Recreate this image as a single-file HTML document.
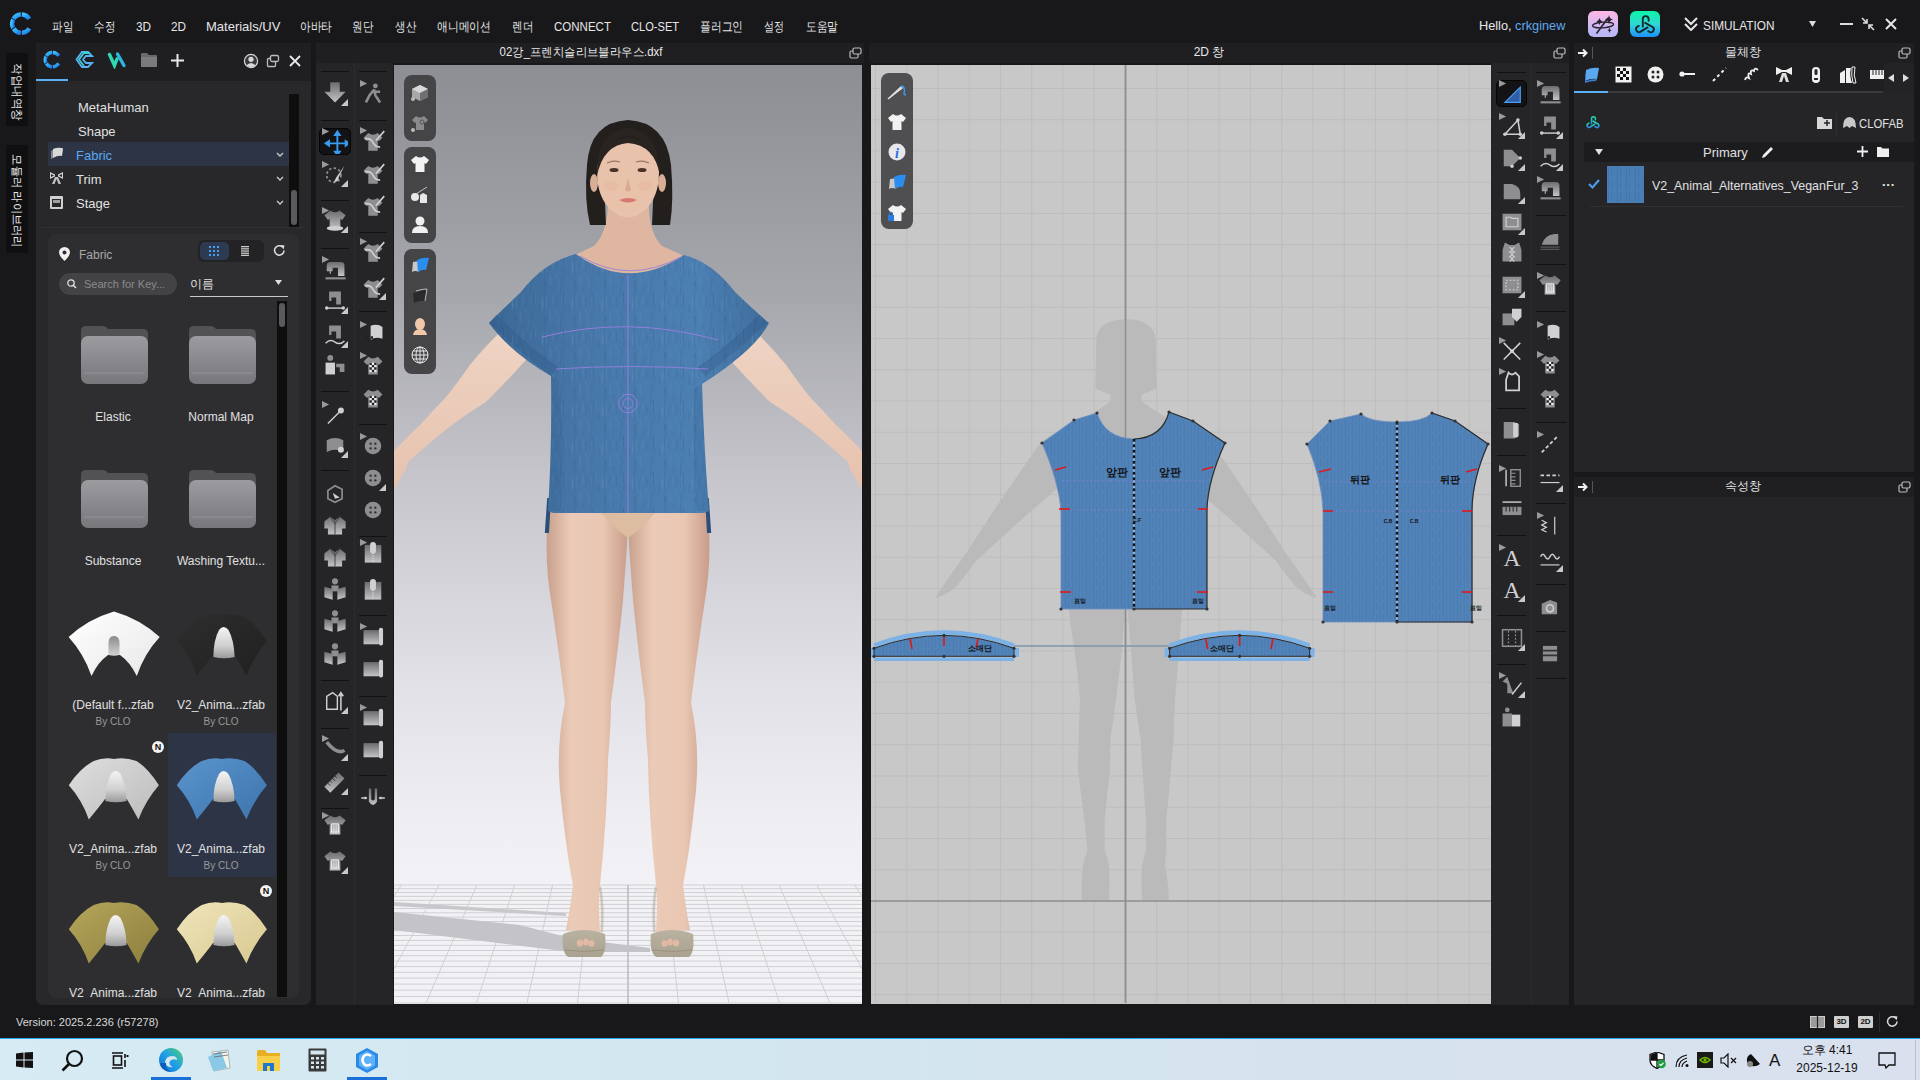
<!DOCTYPE html>
<html><head><meta charset="utf-8">
<style>
*{margin:0;padding:0;box-sizing:border-box}
html,body{width:1920px;height:1080px;overflow:hidden;background:#18181b;font-family:"Liberation Sans",sans-serif;color:#d8d8d8}
.a{position:absolute}
.t{position:absolute;white-space:nowrap;line-height:1}
#menubar .t{font-size:13px;color:#e6e6e6;top:20px}
</style></head><body>
<!-- menubar -->
<div id="menubar" class="a" style="left:0;top:0;width:1920px;height:43px;background:#18181b">
<svg class="a" style="left:6px;top:8px" width="32" height="32" viewBox="0 0 32 32"><defs><linearGradient id="lg6" x1="0" y1="0" x2="1" y2="1"><stop offset="0" stop-color="#3ec0ff"/><stop offset="1" stop-color="#1a7ee8"/></linearGradient></defs><g fill="none" stroke="url(#lg6)" stroke-width="4.4"><path d="M15.88 6.51 A9.2 9.2 0 0 1 23.29 10.96"/><path d="M14.92 6.51 A9.2 9.2 0 0 0 7.51 10.96"/><path d="M7.20 11.52 A9.2 9.2 0 0 0 7.20 19.88"/><path d="M7.68 20.71 A9.2 9.2 0 0 0 14.92 24.89"/><path d="M15.88 24.89 A9.2 9.2 0 0 0 23.29 20.44"/></g></svg>
<span class="t" style="left:52px;transform:scaleX(0.808);transform-origin:0 0">파일</span>
<span class="t" style="left:94px;transform:scaleX(0.808);transform-origin:0 0">수정</span>
<span class="t" style="left:136px;transform:scaleX(0.904);transform-origin:0 0">3D</span>
<span class="t" style="left:171px;transform:scaleX(0.904);transform-origin:0 0">2D</span>
<span class="t" style="left:206px">Materials/UV</span>
<span class="t" style="left:300px;transform:scaleX(0.821);transform-origin:0 0">아바타</span>
<span class="t" style="left:352px;transform:scaleX(0.808);transform-origin:0 0">원단</span>
<span class="t" style="left:395px;transform:scaleX(0.808);transform-origin:0 0">생산</span>
<span class="t" style="left:437px;transform:scaleX(0.831);transform-origin:0 0">애니메이션</span>
<span class="t" style="left:512px;transform:scaleX(0.808);transform-origin:0 0">렌더</span>
<span class="t" style="left:554px;transform:scaleX(0.886);transform-origin:0 0">CONNECT</span>
<span class="t" style="left:631px;transform:scaleX(0.853);transform-origin:0 0">CLO-SET</span>
<span class="t" style="left:700px;transform:scaleX(0.827);transform-origin:0 0">플러그인</span>
<span class="t" style="left:764px;transform:scaleX(0.769);transform-origin:0 0">설정</span>
<span class="t" style="left:806px;transform:scaleX(0.821);transform-origin:0 0">도움말</span>
<span class="t" style="left:1479px;top:19px;transform:scaleX(0.98);transform-origin:0 0">Hello, <span style="color:#5fa8f0">crkginew</span></span>
<div class="a" style="left:1588px;top:11px;width:30px;height:26px;border-radius:6px;background:linear-gradient(#ffb8e6,#bcb8f6 80%)"></div>
<div class="a" style="left:1630px;top:11px;width:30px;height:26px;border-radius:6px;background:linear-gradient(#0cf5a6,#30d8d4 50%,#1e90fa)"></div>
<svg class="a" style="left:1588px;top:11px" width="30" height="26" viewBox="0 0 30 26"><g fill="none" stroke="#2a2430" stroke-width="1.3"><ellipse cx="15" cy="14" rx="10.5" ry="2.8" transform="rotate(-4 15 14)"/></g><path d="M8.5 22.5 L20 7" stroke="#2a2430" stroke-width="1.7"/><path d="M21 4 Q21.6 8 25 8.5 Q21.6 9 21 13 Q20.4 9 17 8.5 Q20.4 8 21 4Z M11.5 7 Q12 10 14.5 10.5 Q12 11 11.5 14 Q11 11 8.5 10.5 Q11 10 11.5 7Z M21.5 16.5 Q21.9 19 23.5 19.3 Q21.9 19.6 21.5 22 Q21.1 19.6 19.5 19.3 Q21.1 19 21.5 16.5Z" fill="#2a2430"/></svg>
<svg class="a" style="left:1630px;top:11px" width="30" height="26" viewBox="0 0 30 26"><g fill="none" stroke="#14282a" stroke-width="1.9" stroke-linecap="round"><path d="M12.8 15.5 V8 A2.9 2.9 0 0 1 18.6 8 V9.8"/><path d="M15.2 11.8 L22.6 16 A2.9 2.9 0 0 1 19.7 21 L18.2 20.2"/><path d="M17.6 16.4 L10.2 20.8 A2.9 2.9 0 0 1 7.3 15.8 L8.8 14.9"/></g></svg>
<svg class="a" style="left:1683px;top:17px" width="16" height="14" viewBox="0 0 16 14"><g fill="none" stroke="#e6e6e6" stroke-width="2"><path d="M2 1 L8 7 L14 1"/><path d="M2 7 L8 13 L14 7"/></g></svg>
<span class="t" style="left:1703px;top:19px;color:#e6e6e6;transform:scaleX(0.91);transform-origin:0 0">SIMULATION</span>
<svg class="a" style="left:1809px;top:21px" width="7" height="6"><path d="M0 0 H7 L3.5 6z" fill="#ddd"/></svg>
<div class="a" style="left:1840px;top:23px;width:13px;height:2px;background:#ddd"></div>
<svg class="a" style="left:1861px;top:17px" width="14" height="14" viewBox="0 0 14 14"><g stroke="#ddd" stroke-width="1.6" fill="none"><path d="M1 1 L6 6 M6 2 V6 H2"/><path d="M13 13 L8 8 M8 12 V8 H12"/></g></svg>
<svg class="a" style="left:1884px;top:17px" width="14" height="14" viewBox="0 0 14 14"><g stroke="#e6e6e6" stroke-width="2"><path d="M2 2 L12 12 M12 2 L2 12"/></g></svg>
</div>

<!-- left vertical tabs -->
<div class="a" style="left:6px;top:53px;width:22px;height:73px;background:#0f0f11"></div>
<div class="a" style="left:6px;top:145px;width:22px;height:108px;background:#0f0f11"></div>
<div class="t" style="left:17px;top:92px;font-size:12px;color:#e8e8e8;transform:translate(-50%,-50%) rotate(90deg) scaleX(0.96)">작업내역창</div>
<div class="t" style="left:17px;top:201px;font-size:12px;color:#e8e8e8;transform:translate(-50%,-50%) rotate(90deg) scaleX(0.94)">모듈러 라이브러리</div>

<!-- library panel -->
<div class="a" style="left:36px;top:43px;width:275px;height:962px;background:#28282b;border-radius:0 0 7px 7px"></div>
<div class="a" style="left:36px;top:43px;width:275px;height:38px;background:#1f1f22"></div>
<div class="a" style="left:36px;top:79px;width:32px;height:2px;background:#5cb0f5"></div>
<svg class="a" style="left:40px;top:47px" width="26" height="26" viewBox="0 0 26 26"><defs><linearGradient id="lg40" x1="0" y1="0" x2="1" y2="1"><stop offset="0" stop-color="#3ec0ff"/><stop offset="1" stop-color="#1a7ee8"/></linearGradient></defs><g fill="none" stroke="url(#lg40)" stroke-width="3.4"><path d="M12.88 5.51 A7.2 7.2 0 0 1 18.67 8.99"/><path d="M12.12 5.51 A7.2 7.2 0 0 0 6.33 8.99"/><path d="M6.08 9.43 A7.2 7.2 0 0 0 6.08 15.97"/><path d="M6.46 16.62 A7.2 7.2 0 0 0 12.12 19.89"/><path d="M12.88 19.89 A7.2 7.2 0 0 0 18.67 16.41"/></g></svg>
<svg class="a" style="left:75px;top:50px" width="19" height="19" viewBox="0 0 19 19"><g fill="none" stroke-width="1.8"><path d="M13 2 L7 2 L1.5 9.5 L7 17 L13 17 L17 13 L11 13 L8 9.5 L11 6 L17 6 Z" stroke="#5ab0f0"/><path d="M15 3 L9 3 L4 9.5 L9 16" stroke="#36d0d0"/></g></svg>
<svg class="a" style="left:107px;top:51px" width="20" height="18" viewBox="0 0 20 18"><g stroke-linecap="round" stroke-width="3.4" fill="none"><path d="M2.5 3.5 L7.5 14.5 L10 8" stroke="#2ed8b0"/><path d="M10.5 3 L17 14.5" stroke="#2ab8e0"/></g></svg>
<svg class="a" style="left:140px;top:52px" width="18" height="16" viewBox="0 0 18 16"><path d="M1 2 Q1 1 2 1 H7 L9 3 H16 Q17 3 17 4 V14 Q17 15 16 15 H2 Q1 15 1 14Z" fill="#6a6a6d"/><path d="M1 5 H17 V14 Q17 15 16 15 H2 Q1 15 1 14Z" fill="#7b7b7e"/></svg>
<svg class="a" style="left:171px;top:54px" width="13" height="13"><path d="M6.5 0 V13 M0 6.5 H13" stroke="#e8e8e8" stroke-width="2"/></svg>
<svg class="a" style="left:243px;top:53px" width="16" height="16" viewBox="0 0 16 16"><circle cx="8" cy="8" r="7.2" fill="#d8d8d8"/><circle cx="8" cy="8" r="6" fill="#3a3a3d"/><circle cx="8" cy="6.3" r="2.6" fill="#d8d8d8"/><path d="M3.3 12.5 Q8 7.5 12.7 12.5 Q8 15.5 3.3 12.5Z" fill="#d8d8d8"/></svg>
<svg class="a" style="left:266px;top:54px" width="14" height="14" viewBox="0 0 14 14"><g fill="none" stroke="#bbb" stroke-width="1.3"><rect x="4.5" y="1.5" width="8" height="6" rx="1.5"/><path d="M4.5 4.5 H2.5 Q1.5 4.5 1.5 5.5 V11.5 Q1.5 12.5 2.5 12.5 H8.5 Q9.5 12.5 9.5 11.5 V7.5"/></g></svg>
<svg class="a" style="left:289px;top:55px" width="12" height="12"><path d="M1 1 L11 11 M11 1 L1 11" stroke="#e8e8e8" stroke-width="1.8"/></svg>

<div class="t" style="left:78px;top:101px;font-size:13px;color:#e0e0e0">MetaHuman</div>
<div class="t" style="left:78px;top:125px;font-size:13px;color:#e0e0e0">Shape</div>
<div class="a" style="left:48px;top:142px;width:241px;height:24px;background:#2d3446"></div>
<div class="t" style="left:76px;top:149px;font-size:13px;color:#5aa8f0">Fabric</div>
<div class="t" style="left:76px;top:173px;font-size:13px;color:#e0e0e0">Trim</div>
<div class="t" style="left:76px;top:197px;font-size:13px;color:#e0e0e0">Stage</div>
<svg class="a" style="left:50px;top:147px" width="14" height="13" viewBox="0 0 14 13"><path d="M1 4 L3 3 L3 11 L1 12Z" fill="#888"/><path d="M3 2 Q7 0 12 1 Q13 1 13 2 L12 9 Q8 8 3 11Z" fill="#d8d8d8"/></svg>
<svg class="a" style="left:50px;top:172px" width="13" height="13" viewBox="0 0 13 13"><path d="M0 0 V7 L5 4.5 V2.5 L8 2.5 V4.5 L13 7 V0 L8 2.5 H5Z" fill="#d0d0d0"/><path d="M5 5 L2 12 H4.5 L6.5 7 L8.5 12 H11 L8 5Z" fill="#c0c0c0"/><path d="M1 2 L4 3.5 L1 5Z M12 2 L9 3.5 L12 5Z" fill="#28282b"/></svg>
<svg class="a" style="left:50px;top:196px" width="13" height="13" viewBox="0 0 13 13"><rect x="0" y="0" width="13" height="13" rx="1" fill="#d0d0d0"/><rect x="2" y="3" width="9" height="8" fill="#28282b"/><rect x="3" y="4" width="7" height="3" fill="#a0a0a0"/><rect x="2" y="11" width="9" height="2" fill="#d0d0d0"/></svg>
<svg class="a" style="left:276px;top:152px" width="8" height="5"><path d="M1 1 L4 4 L7 1" stroke="#ccc" stroke-width="1.3" fill="none"/></svg>
<svg class="a" style="left:276px;top:176px" width="8" height="5"><path d="M1 1 L4 4 L7 1" stroke="#ccc" stroke-width="1.3" fill="none"/></svg>
<svg class="a" style="left:276px;top:200px" width="8" height="5"><path d="M1 1 L4 4 L7 1" stroke="#ccc" stroke-width="1.3" fill="none"/></svg>
<div class="a" style="left:289px;top:94px;width:10px;height:133px;background:#0e0e0f"></div>
<div class="a" style="left:291px;top:190px;width:6px;height:35px;background:#5a5a5c;border-radius:3px"></div>
<div class="a" style="left:42px;top:227px;width:263px;height:1px;background:#303033"></div>

<!-- fabric sub panel -->
<div class="a" style="left:48px;top:234px;width:251px;height:764px;background:#2e2e31;border-radius:8px"></div>
<svg class="a" style="left:59px;top:247px" width="11" height="14" viewBox="0 0 11 14"><path d="M5.5 0 A5.5 5.5 0 0 1 11 5.5 Q11 8.5 5.5 14 Q0 8.5 0 5.5 A5.5 5.5 0 0 1 5.5 0Z" fill="#f0f0f0"/><circle cx="5.5" cy="5.5" r="2" fill="#2e2e31"/></svg>
<div class="t" style="left:79px;top:249px;font-size:12px;color:#a8a8a8">Fabric</div>
<div class="a" style="left:198px;top:240px;width:66px;height:22px;background:#232326;border-radius:6px"></div>
<div class="a" style="left:200px;top:242px;width:29px;height:18px;background:#2c3a52;border-radius:5px"></div>
<svg class="a" style="left:209px;top:246px" width="10" height="10"><g fill="#4a9ef0"><rect x="0" y="0" width="2" height="2"/><rect x="4" y="0" width="2" height="2"/><rect x="8" y="0" width="2" height="2"/><rect x="0" y="4" width="2" height="2"/><rect x="4" y="4" width="2" height="2"/><rect x="8" y="4" width="2" height="2"/><rect x="0" y="8" width="2" height="2"/><rect x="4" y="8" width="2" height="2"/><rect x="8" y="8" width="2" height="2"/></g></svg>
<svg class="a" style="left:241px;top:246px" width="8" height="10"><g fill="#c8c8c8"><rect x="0" y="0" width="8" height="1.3"/><rect x="0" y="2.2" width="8" height="1.3"/><rect x="0" y="4.4" width="8" height="1.3"/><rect x="0" y="6.6" width="8" height="1.3"/><rect x="0" y="8.7" width="8" height="1.3"/></g></svg>
<svg class="a" style="left:273px;top:244px" width="13" height="13" viewBox="0 0 13 13"><path d="M11 6.5 A4.7 4.7 0 1 1 9.5 3" fill="none" stroke="#e0e0e0" stroke-width="1.5"/><path d="M7.5 1 L11.5 1.5 L10.5 5.5Z" fill="#e0e0e0"/></svg>
<div class="a" style="left:59px;top:273px;width:118px;height:22px;background:#434346;border-radius:11px"></div>
<svg class="a" style="left:67px;top:279px" width="10" height="10"><circle cx="4" cy="4" r="3.2" fill="none" stroke="#e0e0e0" stroke-width="1.3"/><path d="M6.3 6.3 L9 9" stroke="#e0e0e0" stroke-width="1.5"/></svg>
<div class="t" style="left:84px;top:279px;font-size:11px;color:#8a8a8c">Search for Key...</div>
<div class="t" style="left:190px;top:278px;font-size:12px;color:#e0e0e0">이름</div>
<svg class="a" style="left:275px;top:280px" width="7" height="5"><path d="M0 0 H7 L3.5 5z" fill="#ddd"/></svg>
<div class="a" style="left:190px;top:296px;width:98px;height:1px;background:#c8c8c8"></div>
<div class="a" style="left:277px;top:301px;width:10px;height:696px;background:#0e0e0f"></div>
<div class="a" style="left:279px;top:303px;width:6px;height:24px;background:#5a5a5c;border-radius:3px"></div>
<svg class="a" style="left:81px;top:326px" width="67" height="58" viewBox="0 0 67 58"><defs><linearGradient id="fg81326" x1="0" y1="0" x2="0" y2="1"><stop offset="0" stop-color="#9c9ca0"/><stop offset="1" stop-color="#77777b"/></linearGradient></defs><path d="M0 5 Q0 0 5 0 H22 Q25 0 27 3 H62 Q67 3 67 8 V20 H0Z" fill="#525255"/><rect x="0" y="10" width="67" height="48" rx="7" fill="url(#fg81326)"/><rect x="3" y="46" width="61" height="2" fill="#8a8a8e"/></svg>
<svg class="a" style="left:189px;top:326px" width="67" height="58" viewBox="0 0 67 58"><defs><linearGradient id="fg189326" x1="0" y1="0" x2="0" y2="1"><stop offset="0" stop-color="#9c9ca0"/><stop offset="1" stop-color="#77777b"/></linearGradient></defs><path d="M0 5 Q0 0 5 0 H22 Q25 0 27 3 H62 Q67 3 67 8 V20 H0Z" fill="#525255"/><rect x="0" y="10" width="67" height="48" rx="7" fill="url(#fg189326)"/><rect x="3" y="46" width="61" height="2" fill="#8a8a8e"/></svg>
<svg class="a" style="left:81px;top:470px" width="67" height="58" viewBox="0 0 67 58"><defs><linearGradient id="fg81470" x1="0" y1="0" x2="0" y2="1"><stop offset="0" stop-color="#9c9ca0"/><stop offset="1" stop-color="#77777b"/></linearGradient></defs><path d="M0 5 Q0 0 5 0 H22 Q25 0 27 3 H62 Q67 3 67 8 V20 H0Z" fill="#525255"/><rect x="0" y="10" width="67" height="48" rx="7" fill="url(#fg81470)"/><rect x="3" y="46" width="61" height="2" fill="#8a8a8e"/></svg>
<svg class="a" style="left:189px;top:470px" width="67" height="58" viewBox="0 0 67 58"><defs><linearGradient id="fg189470" x1="0" y1="0" x2="0" y2="1"><stop offset="0" stop-color="#9c9ca0"/><stop offset="1" stop-color="#77777b"/></linearGradient></defs><path d="M0 5 Q0 0 5 0 H22 Q25 0 27 3 H62 Q67 3 67 8 V20 H0Z" fill="#525255"/><rect x="0" y="10" width="67" height="48" rx="7" fill="url(#fg189470)"/><rect x="3" y="46" width="61" height="2" fill="#8a8a8e"/></svg>
<div class="t" style="left:113px;top:411px;font-size:12px;color:#e0e0e0;transform:translateX(-50%)">Elastic</div>
<div class="t" style="left:221px;top:411px;font-size:12px;color:#e0e0e0;transform:translateX(-50%)">Normal Map</div>
<div class="t" style="left:113px;top:555px;font-size:12px;color:#e0e0e0;transform:translateX(-50%)">Substance</div>
<div class="t" style="left:221px;top:555px;font-size:12px;color:#e0e0e0;transform:translateX(-50%)">Washing Textu...</div>
<div class="a" style="left:168px;top:733px;width:108px;height:144px;background:#2d3446"></div>
<svg class="a" style="left:68px;top:610px" width="92" height="68" viewBox="0 0 92 68"><defs><linearGradient id="dg68610" x1="0" y1="0" x2="1" y2="1"><stop offset="0" stop-color="#ffffff"/><stop offset="1" stop-color="#e8e8e8"/></linearGradient><linearGradient id="pdg68610" x1="0" y1="0" x2="0" y2="1"><stop offset="0" stop-color="#8a8a8a"/><stop offset="1" stop-color="#d4d4d4"/></linearGradient></defs><path d="M0.6 27 Q20 9 46 1.5 Q72 9 91.7 27 Q76 44 68.8 66 Q62 52 52 45 L40 45 Q30 52 23.5 66 Q16 44 0.6 27Z" fill="url(#dg68610)"/><path d="M40.5 45 V33 Q40.5 26 46 26 Q51.5 26 51.5 33 V45 Q46 46.5 40.5 45Z" fill="url(#pdg68610)"/></svg>
<svg class="a" style="left:176px;top:610px" width="92" height="68" viewBox="0 0 92 68"><defs><linearGradient id="dg176610" x1="0" y1="0" x2="1" y2="1"><stop offset="0" stop-color="#2e2e2e"/><stop offset="1" stop-color="#202020"/></linearGradient><linearGradient id="qdg176610" x1="0" y1="0" x2="0" y2="1"><stop offset="0" stop-color="#f4f4f4"/><stop offset="0.6" stop-color="#d0d0d0"/><stop offset="1" stop-color="#9a9a9a"/></linearGradient><linearGradient id="pdg176610" x1="0" y1="0" x2="0" y2="1"><stop offset="0" stop-color="#8a8a8a"/><stop offset="1" stop-color="#d4d4d4"/></linearGradient></defs><path d="M0.8 31.3 Q12 14 25.7 7 Q36 3 46 5 Q57 3 68.5 7 Q80 14 90.9 31.3 Q78 46 70.4 65.4 Q63 52 58.8 45 L37 45 Q32 52 20.8 65.4 Q14 46 0.8 31.3Z" fill="url(#dg176610)"/><path d="M37.4 46.9 Q37.5 30 43 20 Q47.5 14 52.5 20 Q58 30 58.6 46.9 Q48 49.5 37.4 46.9Z" fill="url(#qdg176610)"/></svg>
<svg class="a" style="left:68px;top:754px" width="92" height="68" viewBox="0 0 92 68"><defs><linearGradient id="dg68754" x1="0" y1="0" x2="1" y2="1"><stop offset="0" stop-color="#dedede"/><stop offset="1" stop-color="#bcbcbc"/></linearGradient><linearGradient id="qdg68754" x1="0" y1="0" x2="0" y2="1"><stop offset="0" stop-color="#f4f4f4"/><stop offset="0.6" stop-color="#d0d0d0"/><stop offset="1" stop-color="#9a9a9a"/></linearGradient><linearGradient id="pdg68754" x1="0" y1="0" x2="0" y2="1"><stop offset="0" stop-color="#8a8a8a"/><stop offset="1" stop-color="#d4d4d4"/></linearGradient></defs><path d="M0.8 31.3 Q12 14 25.7 7 Q36 3 46 5 Q57 3 68.5 7 Q80 14 90.9 31.3 Q78 46 70.4 65.4 Q63 52 58.8 45 L37 45 Q32 52 20.8 65.4 Q14 46 0.8 31.3Z" fill="url(#dg68754)"/><path d="M37.4 46.9 Q37.5 30 43 20 Q47.5 14 52.5 20 Q58 30 58.6 46.9 Q48 49.5 37.4 46.9Z" fill="url(#qdg68754)"/></svg>
<svg class="a" style="left:176px;top:754px" width="92" height="68" viewBox="0 0 92 68"><defs><linearGradient id="dg176754" x1="0" y1="0" x2="1" y2="1"><stop offset="0" stop-color="#5b95cd"/><stop offset="1" stop-color="#3c74ae"/></linearGradient><linearGradient id="qdg176754" x1="0" y1="0" x2="0" y2="1"><stop offset="0" stop-color="#f4f4f4"/><stop offset="0.6" stop-color="#d0d0d0"/><stop offset="1" stop-color="#9a9a9a"/></linearGradient><linearGradient id="pdg176754" x1="0" y1="0" x2="0" y2="1"><stop offset="0" stop-color="#8a8a8a"/><stop offset="1" stop-color="#d4d4d4"/></linearGradient></defs><path d="M0.8 31.3 Q12 14 25.7 7 Q36 3 46 5 Q57 3 68.5 7 Q80 14 90.9 31.3 Q78 46 70.4 65.4 Q63 52 58.8 45 L37 45 Q32 52 20.8 65.4 Q14 46 0.8 31.3Z" fill="url(#dg176754)"/><path d="M37.4 46.9 Q37.5 30 43 20 Q47.5 14 52.5 20 Q58 30 58.6 46.9 Q48 49.5 37.4 46.9Z" fill="url(#qdg176754)"/></svg>
<svg class="a" style="left:68px;top:898px" width="92" height="68" viewBox="0 0 92 68"><defs><linearGradient id="dg68898" x1="0" y1="0" x2="1" y2="1"><stop offset="0" stop-color="#b5a65a"/><stop offset="1" stop-color="#8c7f3e"/></linearGradient><linearGradient id="qdg68898" x1="0" y1="0" x2="0" y2="1"><stop offset="0" stop-color="#f4f4f4"/><stop offset="0.6" stop-color="#d0d0d0"/><stop offset="1" stop-color="#9a9a9a"/></linearGradient><linearGradient id="pdg68898" x1="0" y1="0" x2="0" y2="1"><stop offset="0" stop-color="#8a8a8a"/><stop offset="1" stop-color="#d4d4d4"/></linearGradient></defs><path d="M0.8 31.3 Q12 14 25.7 7 Q36 3 46 5 Q57 3 68.5 7 Q80 14 90.9 31.3 Q78 46 70.4 65.4 Q63 52 58.8 45 L37 45 Q32 52 20.8 65.4 Q14 46 0.8 31.3Z" fill="url(#dg68898)"/><path d="M37.4 46.9 Q37.5 30 43 20 Q47.5 14 52.5 20 Q58 30 58.6 46.9 Q48 49.5 37.4 46.9Z" fill="url(#qdg68898)"/></svg>
<svg class="a" style="left:176px;top:898px" width="92" height="68" viewBox="0 0 92 68"><defs><linearGradient id="dg176898" x1="0" y1="0" x2="1" y2="1"><stop offset="0" stop-color="#f0e6bc"/><stop offset="1" stop-color="#d8c890"/></linearGradient><linearGradient id="qdg176898" x1="0" y1="0" x2="0" y2="1"><stop offset="0" stop-color="#f4f4f4"/><stop offset="0.6" stop-color="#d0d0d0"/><stop offset="1" stop-color="#9a9a9a"/></linearGradient><linearGradient id="pdg176898" x1="0" y1="0" x2="0" y2="1"><stop offset="0" stop-color="#8a8a8a"/><stop offset="1" stop-color="#d4d4d4"/></linearGradient></defs><path d="M0.8 31.3 Q12 14 25.7 7 Q36 3 46 5 Q57 3 68.5 7 Q80 14 90.9 31.3 Q78 46 70.4 65.4 Q63 52 58.8 45 L37 45 Q32 52 20.8 65.4 Q14 46 0.8 31.3Z" fill="url(#dg176898)"/><path d="M37.4 46.9 Q37.5 30 43 20 Q47.5 14 52.5 20 Q58 30 58.6 46.9 Q48 49.5 37.4 46.9Z" fill="url(#qdg176898)"/></svg>
<div class="t" style="left:113px;top:699px;font-size:12px;color:#e0e0e0;transform:translateX(-50%)">(Default f...zfab</div>
<div class="t" style="left:221px;top:699px;font-size:12px;color:#e0e0e0;transform:translateX(-50%)">V2_Anima...zfab</div>
<div class="t" style="left:113px;top:717px;font-size:10px;color:#9a9a9a;transform:translateX(-50%)">By CLO</div>
<div class="t" style="left:221px;top:717px;font-size:10px;color:#9a9a9a;transform:translateX(-50%)">By CLO</div>
<div class="t" style="left:113px;top:843px;font-size:12px;color:#e0e0e0;transform:translateX(-50%)">V2_Anima...zfab</div>
<div class="t" style="left:221px;top:843px;font-size:12px;color:#e0e0e0;transform:translateX(-50%)">V2_Anima...zfab</div>
<div class="t" style="left:113px;top:861px;font-size:10px;color:#9a9a9a;transform:translateX(-50%)">By CLO</div>
<div class="t" style="left:221px;top:861px;font-size:10px;color:#9a9a9a;transform:translateX(-50%)">By CLO</div>
<div class="a" style="left:48px;top:980px;width:229px;height:18px;overflow:hidden"><div class="t" style="left:65px;top:7px;font-size:12px;color:#e0e0e0;transform:translateX(-50%)">V2_Anima...zfab</div><div class="t" style="left:173px;top:7px;font-size:12px;color:#e0e0e0;transform:translateX(-50%)">V2_Anima...zfab</div></div>
<div class="a" style="left:152px;top:741px;width:12px;height:12px;border-radius:6px;background:#f4f4f4;color:#111;font-size:9px;font-weight:bold;line-height:12px;text-align:center">N</div>
<div class="a" style="left:260px;top:885px;width:12px;height:12px;border-radius:6px;background:#f4f4f4;color:#111;font-size:9px;font-weight:bold;line-height:12px;text-align:center">N</div>
<!-- version bar -->
<div class="t" style="left:16px;top:1017px;font-size:11px;color:#d8d8d8">Version: 2025.2.236 (r57278)</div>
<!-- 3D toolbar -->
<div class="a" style="left:316px;top:63px;width:77px;height:942px;background:#252528"></div>
<!-- 3D title -->
<div class="a" style="left:316px;top:43px;width:548px;height:20px;background:#1f1f22"></div>
<!-- 3D viewport -->
<div class="a" style="left:394px;top:65px;width:468px;height:939px;overflow:hidden;background:linear-gradient(#8d8d94 0px,#a6a6ad 230px,#c8c8ce 430px,#e2e1e7 620px,#efeef3 760px,#f2f1f5 820px)">
<svg class="a" style="left:0;top:0" width="468" height="939" viewBox="394 65 468 939">
<rect x="394" y="885" width="468" height="119" fill="#f2f1f5"/>
<g stroke="#d0d0d4" stroke-width="1"><line x1="394" y1="885.0" x2="862" y2="885.0"/>
<line x1="394" y1="888.7" x2="862" y2="888.7"/>
<line x1="394" y1="892.5" x2="862" y2="892.5"/>
<line x1="394" y1="896.4" x2="862" y2="896.4"/>
<line x1="394" y1="900.4" x2="862" y2="900.4"/>
<line x1="394" y1="904.4" x2="862" y2="904.4"/>
<line x1="394" y1="908.5" x2="862" y2="908.5"/>
<line x1="394" y1="912.8" x2="862" y2="912.8"/>
<line x1="394" y1="917.1" x2="862" y2="917.1"/>
<line x1="394" y1="921.5" x2="862" y2="921.5"/>
<line x1="394" y1="926.1" x2="862" y2="926.1"/>
<line x1="394" y1="930.7" x2="862" y2="930.7"/>
<line x1="394" y1="935.5" x2="862" y2="935.5"/>
<line x1="394" y1="940.4" x2="862" y2="940.4"/>
<line x1="394" y1="945.4" x2="862" y2="945.4"/>
<line x1="394" y1="950.5" x2="862" y2="950.5"/>
<line x1="394" y1="955.7" x2="862" y2="955.7"/>
<line x1="394" y1="961.1" x2="862" y2="961.1"/>
<line x1="394" y1="966.6" x2="862" y2="966.6"/>
<line x1="394" y1="972.3" x2="862" y2="972.3"/>
<line x1="394" y1="978.1" x2="862" y2="978.1"/>
<line x1="394" y1="984.1" x2="862" y2="984.1"/>
<line x1="394" y1="990.2" x2="862" y2="990.2"/>
<line x1="394" y1="996.5" x2="862" y2="996.5"/>
<line x1="394" y1="1003.0" x2="862" y2="1003.0"/>
<line x1="99.3" y1="885" x2="-79.0" y2="1003"/>
<line x1="137.0" y1="885" x2="-28.5" y2="1003"/>
<line x1="174.8" y1="885" x2="22.0" y2="1003"/>
<line x1="212.6" y1="885" x2="72.5" y2="1003"/>
<line x1="250.3" y1="885" x2="123.0" y2="1003"/>
<line x1="288.1" y1="885" x2="173.5" y2="1003"/>
<line x1="325.9" y1="885" x2="224.0" y2="1003"/>
<line x1="363.6" y1="885" x2="274.5" y2="1003"/>
<line x1="401.4" y1="885" x2="325.0" y2="1003"/>
<line x1="439.2" y1="885" x2="375.5" y2="1003"/>
<line x1="476.9" y1="885" x2="426.0" y2="1003"/>
<line x1="514.7" y1="885" x2="476.5" y2="1003"/>
<line x1="552.5" y1="885" x2="527.0" y2="1003"/>
<line x1="590.2" y1="885" x2="577.5" y2="1003"/>
<line x1="628.0" y1="885" x2="628.0" y2="1003"/>
<line x1="665.8" y1="885" x2="678.5" y2="1003"/>
<line x1="703.5" y1="885" x2="729.0" y2="1003"/>
<line x1="741.3" y1="885" x2="779.5" y2="1003"/>
<line x1="779.1" y1="885" x2="830.0" y2="1003"/>
<line x1="816.8" y1="885" x2="880.5" y2="1003"/>
<line x1="854.6" y1="885" x2="931.0" y2="1003"/>
<line x1="892.4" y1="885" x2="981.5" y2="1003"/>
<line x1="930.1" y1="885" x2="1032.0" y2="1003"/>
<line x1="967.9" y1="885" x2="1082.5" y2="1003"/>
<line x1="1005.7" y1="885" x2="1133.0" y2="1003"/>
<line x1="1043.4" y1="885" x2="1183.5" y2="1003"/>
<line x1="1081.2" y1="885" x2="1234.0" y2="1003"/>
<line x1="1119.0" y1="885" x2="1284.5" y2="1003"/>
<line x1="1156.7" y1="885" x2="1335.0" y2="1003"/></g>
<line x1="628" y1="885" x2="628" y2="1004" stroke="#b8b8bd" stroke-width="1.3"/>
<path d="M394 902 L566 913 L566 916 L394 906Z" fill="#c8c8cc"/>
<path d="M394 912 L520 925 L570 938 L650 948 L650 952 L570 952 L394 930Z" fill="#c4c4c8"/>
<defs>
<linearGradient id="skinL" x1="0" x2="1"><stop offset="0" stop-color="#c8a08c"/><stop offset="0.3" stop-color="#ebcbb8"/><stop offset="0.7" stop-color="#e8c6b2"/><stop offset="1" stop-color="#c89c88"/></linearGradient>
<linearGradient id="armG" x1="0" y1="0" x2="0" y2="1"><stop offset="0" stop-color="#efd3c3"/><stop offset="1" stop-color="#e6c2ae"/></linearGradient>
<linearGradient id="shirtG" x1="0" x2="1"><stop offset="0" stop-color="#3b6896"/><stop offset="0.35" stop-color="#4878aa"/><stop offset="0.75" stop-color="#4c7fb2"/><stop offset="1" stop-color="#3f6d9c"/></linearGradient>
<linearGradient id="shoeG" x1="0" y1="0" x2="0" y2="1"><stop offset="0" stop-color="#b9b2a0"/><stop offset="1" stop-color="#aaa290"/></linearGradient>
<pattern id="fur" width="30" height="36" patternUnits="userSpaceOnUse"><path d="M18.7 26.7 q0.7 5.3 0 10.6" stroke="#6090c0" stroke-width="1.6" opacity="0.12" fill="none"/><path d="M18.7 -9.3 q0.7 5.3 0 10.6" stroke="#6090c0" stroke-width="1.6" opacity="0.12" fill="none"/><path d="M18.7 62.7 q0.7 5.3 0 10.6" stroke="#6090c0" stroke-width="1.6" opacity="0.12" fill="none"/><path d="M-11.3 26.7 q0.7 5.3 0 10.6" stroke="#6090c0" stroke-width="1.6" opacity="0.12" fill="none"/><path d="M-11.3 -9.3 q0.7 5.3 0 10.6" stroke="#6090c0" stroke-width="1.6" opacity="0.12" fill="none"/><path d="M-11.3 62.7 q0.7 5.3 0 10.6" stroke="#6090c0" stroke-width="1.6" opacity="0.12" fill="none"/><path d="M48.7 26.7 q0.7 5.3 0 10.6" stroke="#6090c0" stroke-width="1.6" opacity="0.12" fill="none"/><path d="M48.7 -9.3 q0.7 5.3 0 10.6" stroke="#6090c0" stroke-width="1.6" opacity="0.12" fill="none"/><path d="M48.7 62.7 q0.7 5.3 0 10.6" stroke="#6090c0" stroke-width="1.6" opacity="0.12" fill="none"/><path d="M14.0 34.0 q-1.2 4.8 0 9.5" stroke="#2c5888" stroke-width="1.5" opacity="0.16" fill="none"/><path d="M14.0 -2.0 q-1.2 4.8 0 9.5" stroke="#2c5888" stroke-width="1.5" opacity="0.16" fill="none"/><path d="M14.0 70.0 q-1.2 4.8 0 9.5" stroke="#2c5888" stroke-width="1.5" opacity="0.16" fill="none"/><path d="M-16.0 34.0 q-1.2 4.8 0 9.5" stroke="#2c5888" stroke-width="1.5" opacity="0.16" fill="none"/><path d="M-16.0 -2.0 q-1.2 4.8 0 9.5" stroke="#2c5888" stroke-width="1.5" opacity="0.16" fill="none"/><path d="M-16.0 70.0 q-1.2 4.8 0 9.5" stroke="#2c5888" stroke-width="1.5" opacity="0.16" fill="none"/><path d="M44.0 34.0 q-1.2 4.8 0 9.5" stroke="#2c5888" stroke-width="1.5" opacity="0.16" fill="none"/><path d="M44.0 -2.0 q-1.2 4.8 0 9.5" stroke="#2c5888" stroke-width="1.5" opacity="0.16" fill="none"/><path d="M44.0 70.0 q-1.2 4.8 0 9.5" stroke="#2c5888" stroke-width="1.5" opacity="0.16" fill="none"/><path d="M16.3 20.7 q-0.7 2.5 0 5.1" stroke="#6090c0" stroke-width="1.0" opacity="0.24" fill="none"/><path d="M16.3 -15.3 q-0.7 2.5 0 5.1" stroke="#6090c0" stroke-width="1.0" opacity="0.24" fill="none"/><path d="M16.3 56.7 q-0.7 2.5 0 5.1" stroke="#6090c0" stroke-width="1.0" opacity="0.24" fill="none"/><path d="M-13.7 20.7 q-0.7 2.5 0 5.1" stroke="#6090c0" stroke-width="1.0" opacity="0.24" fill="none"/><path d="M-13.7 -15.3 q-0.7 2.5 0 5.1" stroke="#6090c0" stroke-width="1.0" opacity="0.24" fill="none"/><path d="M-13.7 56.7 q-0.7 2.5 0 5.1" stroke="#6090c0" stroke-width="1.0" opacity="0.24" fill="none"/><path d="M46.3 20.7 q-0.7 2.5 0 5.1" stroke="#6090c0" stroke-width="1.0" opacity="0.24" fill="none"/><path d="M46.3 -15.3 q-0.7 2.5 0 5.1" stroke="#6090c0" stroke-width="1.0" opacity="0.24" fill="none"/><path d="M46.3 56.7 q-0.7 2.5 0 5.1" stroke="#6090c0" stroke-width="1.0" opacity="0.24" fill="none"/><path d="M4.8 28.7 q-1.1 3.0 0 6.0" stroke="#2c5888" stroke-width="1.3" opacity="0.26" fill="none"/><path d="M4.8 -7.3 q-1.1 3.0 0 6.0" stroke="#2c5888" stroke-width="1.3" opacity="0.26" fill="none"/><path d="M4.8 64.7 q-1.1 3.0 0 6.0" stroke="#2c5888" stroke-width="1.3" opacity="0.26" fill="none"/><path d="M-25.2 28.7 q-1.1 3.0 0 6.0" stroke="#2c5888" stroke-width="1.3" opacity="0.26" fill="none"/><path d="M-25.2 -7.3 q-1.1 3.0 0 6.0" stroke="#2c5888" stroke-width="1.3" opacity="0.26" fill="none"/><path d="M-25.2 64.7 q-1.1 3.0 0 6.0" stroke="#2c5888" stroke-width="1.3" opacity="0.26" fill="none"/><path d="M34.8 28.7 q-1.1 3.0 0 6.0" stroke="#2c5888" stroke-width="1.3" opacity="0.26" fill="none"/><path d="M34.8 -7.3 q-1.1 3.0 0 6.0" stroke="#2c5888" stroke-width="1.3" opacity="0.26" fill="none"/><path d="M34.8 64.7 q-1.1 3.0 0 6.0" stroke="#2c5888" stroke-width="1.3" opacity="0.26" fill="none"/><path d="M6.3 7.8 q-0.6 5.9 0 11.9" stroke="#6090c0" stroke-width="1.5" opacity="0.21" fill="none"/><path d="M6.3 -28.2 q-0.6 5.9 0 11.9" stroke="#6090c0" stroke-width="1.5" opacity="0.21" fill="none"/><path d="M6.3 43.8 q-0.6 5.9 0 11.9" stroke="#6090c0" stroke-width="1.5" opacity="0.21" fill="none"/><path d="M-23.7 7.8 q-0.6 5.9 0 11.9" stroke="#6090c0" stroke-width="1.5" opacity="0.21" fill="none"/><path d="M-23.7 -28.2 q-0.6 5.9 0 11.9" stroke="#6090c0" stroke-width="1.5" opacity="0.21" fill="none"/><path d="M-23.7 43.8 q-0.6 5.9 0 11.9" stroke="#6090c0" stroke-width="1.5" opacity="0.21" fill="none"/><path d="M36.3 7.8 q-0.6 5.9 0 11.9" stroke="#6090c0" stroke-width="1.5" opacity="0.21" fill="none"/><path d="M36.3 -28.2 q-0.6 5.9 0 11.9" stroke="#6090c0" stroke-width="1.5" opacity="0.21" fill="none"/><path d="M36.3 43.8 q-0.6 5.9 0 11.9" stroke="#6090c0" stroke-width="1.5" opacity="0.21" fill="none"/><path d="M20.3 7.4 q1.4 5.8 0 11.6" stroke="#6090c0" stroke-width="1.4" opacity="0.17" fill="none"/><path d="M20.3 -28.6 q1.4 5.8 0 11.6" stroke="#6090c0" stroke-width="1.4" opacity="0.17" fill="none"/><path d="M20.3 43.4 q1.4 5.8 0 11.6" stroke="#6090c0" stroke-width="1.4" opacity="0.17" fill="none"/><path d="M-9.7 7.4 q1.4 5.8 0 11.6" stroke="#6090c0" stroke-width="1.4" opacity="0.17" fill="none"/><path d="M-9.7 -28.6 q1.4 5.8 0 11.6" stroke="#6090c0" stroke-width="1.4" opacity="0.17" fill="none"/><path d="M-9.7 43.4 q1.4 5.8 0 11.6" stroke="#6090c0" stroke-width="1.4" opacity="0.17" fill="none"/><path d="M50.3 7.4 q1.4 5.8 0 11.6" stroke="#6090c0" stroke-width="1.4" opacity="0.17" fill="none"/><path d="M50.3 -28.6 q1.4 5.8 0 11.6" stroke="#6090c0" stroke-width="1.4" opacity="0.17" fill="none"/><path d="M50.3 43.4 q1.4 5.8 0 11.6" stroke="#6090c0" stroke-width="1.4" opacity="0.17" fill="none"/><path d="M10.8 6.0 q-0.6 3.0 0 6.0" stroke="#2c5888" stroke-width="0.9" opacity="0.12" fill="none"/><path d="M10.8 -30.0 q-0.6 3.0 0 6.0" stroke="#2c5888" stroke-width="0.9" opacity="0.12" fill="none"/><path d="M10.8 42.0 q-0.6 3.0 0 6.0" stroke="#2c5888" stroke-width="0.9" opacity="0.12" fill="none"/><path d="M-19.2 6.0 q-0.6 3.0 0 6.0" stroke="#2c5888" stroke-width="0.9" opacity="0.12" fill="none"/><path d="M-19.2 -30.0 q-0.6 3.0 0 6.0" stroke="#2c5888" stroke-width="0.9" opacity="0.12" fill="none"/><path d="M-19.2 42.0 q-0.6 3.0 0 6.0" stroke="#2c5888" stroke-width="0.9" opacity="0.12" fill="none"/><path d="M40.8 6.0 q-0.6 3.0 0 6.0" stroke="#2c5888" stroke-width="0.9" opacity="0.12" fill="none"/><path d="M40.8 -30.0 q-0.6 3.0 0 6.0" stroke="#2c5888" stroke-width="0.9" opacity="0.12" fill="none"/><path d="M40.8 42.0 q-0.6 3.0 0 6.0" stroke="#2c5888" stroke-width="0.9" opacity="0.12" fill="none"/><path d="M20.3 12.2 q-0.1 3.6 0 7.2" stroke="#2c5888" stroke-width="1.5" opacity="0.20" fill="none"/><path d="M20.3 -23.8 q-0.1 3.6 0 7.2" stroke="#2c5888" stroke-width="1.5" opacity="0.20" fill="none"/><path d="M20.3 48.2 q-0.1 3.6 0 7.2" stroke="#2c5888" stroke-width="1.5" opacity="0.20" fill="none"/><path d="M-9.7 12.2 q-0.1 3.6 0 7.2" stroke="#2c5888" stroke-width="1.5" opacity="0.20" fill="none"/><path d="M-9.7 -23.8 q-0.1 3.6 0 7.2" stroke="#2c5888" stroke-width="1.5" opacity="0.20" fill="none"/><path d="M-9.7 48.2 q-0.1 3.6 0 7.2" stroke="#2c5888" stroke-width="1.5" opacity="0.20" fill="none"/><path d="M50.3 12.2 q-0.1 3.6 0 7.2" stroke="#2c5888" stroke-width="1.5" opacity="0.20" fill="none"/><path d="M50.3 -23.8 q-0.1 3.6 0 7.2" stroke="#2c5888" stroke-width="1.5" opacity="0.20" fill="none"/><path d="M50.3 48.2 q-0.1 3.6 0 7.2" stroke="#2c5888" stroke-width="1.5" opacity="0.20" fill="none"/><path d="M21.1 2.1 q0.7 5.9 0 11.8" stroke="#6090c0" stroke-width="0.8" opacity="0.12" fill="none"/><path d="M21.1 -33.9 q0.7 5.9 0 11.8" stroke="#6090c0" stroke-width="0.8" opacity="0.12" fill="none"/><path d="M21.1 38.1 q0.7 5.9 0 11.8" stroke="#6090c0" stroke-width="0.8" opacity="0.12" fill="none"/><path d="M-8.9 2.1 q0.7 5.9 0 11.8" stroke="#6090c0" stroke-width="0.8" opacity="0.12" fill="none"/><path d="M-8.9 -33.9 q0.7 5.9 0 11.8" stroke="#6090c0" stroke-width="0.8" opacity="0.12" fill="none"/><path d="M-8.9 38.1 q0.7 5.9 0 11.8" stroke="#6090c0" stroke-width="0.8" opacity="0.12" fill="none"/><path d="M51.1 2.1 q0.7 5.9 0 11.8" stroke="#6090c0" stroke-width="0.8" opacity="0.12" fill="none"/><path d="M51.1 -33.9 q0.7 5.9 0 11.8" stroke="#6090c0" stroke-width="0.8" opacity="0.12" fill="none"/><path d="M51.1 38.1 q0.7 5.9 0 11.8" stroke="#6090c0" stroke-width="0.8" opacity="0.12" fill="none"/><path d="M23.6 13.2 q-1.4 4.5 0 9.0" stroke="#2c5888" stroke-width="0.8" opacity="0.27" fill="none"/><path d="M23.6 -22.8 q-1.4 4.5 0 9.0" stroke="#2c5888" stroke-width="0.8" opacity="0.27" fill="none"/><path d="M23.6 49.2 q-1.4 4.5 0 9.0" stroke="#2c5888" stroke-width="0.8" opacity="0.27" fill="none"/><path d="M-6.4 13.2 q-1.4 4.5 0 9.0" stroke="#2c5888" stroke-width="0.8" opacity="0.27" fill="none"/><path d="M-6.4 -22.8 q-1.4 4.5 0 9.0" stroke="#2c5888" stroke-width="0.8" opacity="0.27" fill="none"/><path d="M-6.4 49.2 q-1.4 4.5 0 9.0" stroke="#2c5888" stroke-width="0.8" opacity="0.27" fill="none"/><path d="M53.6 13.2 q-1.4 4.5 0 9.0" stroke="#2c5888" stroke-width="0.8" opacity="0.27" fill="none"/><path d="M53.6 -22.8 q-1.4 4.5 0 9.0" stroke="#2c5888" stroke-width="0.8" opacity="0.27" fill="none"/><path d="M53.6 49.2 q-1.4 4.5 0 9.0" stroke="#2c5888" stroke-width="0.8" opacity="0.27" fill="none"/><path d="M5.9 27.2 q-0.5 5.8 0 11.5" stroke="#2c5888" stroke-width="1.6" opacity="0.20" fill="none"/><path d="M5.9 -8.8 q-0.5 5.8 0 11.5" stroke="#2c5888" stroke-width="1.6" opacity="0.20" fill="none"/><path d="M5.9 63.2 q-0.5 5.8 0 11.5" stroke="#2c5888" stroke-width="1.6" opacity="0.20" fill="none"/><path d="M-24.1 27.2 q-0.5 5.8 0 11.5" stroke="#2c5888" stroke-width="1.6" opacity="0.20" fill="none"/><path d="M-24.1 -8.8 q-0.5 5.8 0 11.5" stroke="#2c5888" stroke-width="1.6" opacity="0.20" fill="none"/><path d="M-24.1 63.2 q-0.5 5.8 0 11.5" stroke="#2c5888" stroke-width="1.6" opacity="0.20" fill="none"/><path d="M35.9 27.2 q-0.5 5.8 0 11.5" stroke="#2c5888" stroke-width="1.6" opacity="0.20" fill="none"/><path d="M35.9 -8.8 q-0.5 5.8 0 11.5" stroke="#2c5888" stroke-width="1.6" opacity="0.20" fill="none"/><path d="M35.9 63.2 q-0.5 5.8 0 11.5" stroke="#2c5888" stroke-width="1.6" opacity="0.20" fill="none"/><path d="M23.3 3.9 q1.1 5.1 0 10.2" stroke="#2c5888" stroke-width="1.4" opacity="0.27" fill="none"/><path d="M23.3 -32.1 q1.1 5.1 0 10.2" stroke="#2c5888" stroke-width="1.4" opacity="0.27" fill="none"/><path d="M23.3 39.9 q1.1 5.1 0 10.2" stroke="#2c5888" stroke-width="1.4" opacity="0.27" fill="none"/><path d="M-6.7 3.9 q1.1 5.1 0 10.2" stroke="#2c5888" stroke-width="1.4" opacity="0.27" fill="none"/><path d="M-6.7 -32.1 q1.1 5.1 0 10.2" stroke="#2c5888" stroke-width="1.4" opacity="0.27" fill="none"/><path d="M-6.7 39.9 q1.1 5.1 0 10.2" stroke="#2c5888" stroke-width="1.4" opacity="0.27" fill="none"/><path d="M53.3 3.9 q1.1 5.1 0 10.2" stroke="#2c5888" stroke-width="1.4" opacity="0.27" fill="none"/><path d="M53.3 -32.1 q1.1 5.1 0 10.2" stroke="#2c5888" stroke-width="1.4" opacity="0.27" fill="none"/><path d="M53.3 39.9 q1.1 5.1 0 10.2" stroke="#2c5888" stroke-width="1.4" opacity="0.27" fill="none"/><path d="M2.7 12.3 q-0.5 4.6 0 9.3" stroke="#6090c0" stroke-width="1.5" opacity="0.21" fill="none"/><path d="M2.7 -23.7 q-0.5 4.6 0 9.3" stroke="#6090c0" stroke-width="1.5" opacity="0.21" fill="none"/><path d="M2.7 48.3 q-0.5 4.6 0 9.3" stroke="#6090c0" stroke-width="1.5" opacity="0.21" fill="none"/><path d="M-27.3 12.3 q-0.5 4.6 0 9.3" stroke="#6090c0" stroke-width="1.5" opacity="0.21" fill="none"/><path d="M-27.3 -23.7 q-0.5 4.6 0 9.3" stroke="#6090c0" stroke-width="1.5" opacity="0.21" fill="none"/><path d="M-27.3 48.3 q-0.5 4.6 0 9.3" stroke="#6090c0" stroke-width="1.5" opacity="0.21" fill="none"/><path d="M32.7 12.3 q-0.5 4.6 0 9.3" stroke="#6090c0" stroke-width="1.5" opacity="0.21" fill="none"/><path d="M32.7 -23.7 q-0.5 4.6 0 9.3" stroke="#6090c0" stroke-width="1.5" opacity="0.21" fill="none"/><path d="M32.7 48.3 q-0.5 4.6 0 9.3" stroke="#6090c0" stroke-width="1.5" opacity="0.21" fill="none"/><path d="M9.4 11.4 q-1.1 3.1 0 6.2" stroke="#2c5888" stroke-width="0.9" opacity="0.28" fill="none"/><path d="M9.4 -24.6 q-1.1 3.1 0 6.2" stroke="#2c5888" stroke-width="0.9" opacity="0.28" fill="none"/><path d="M9.4 47.4 q-1.1 3.1 0 6.2" stroke="#2c5888" stroke-width="0.9" opacity="0.28" fill="none"/><path d="M-20.6 11.4 q-1.1 3.1 0 6.2" stroke="#2c5888" stroke-width="0.9" opacity="0.28" fill="none"/><path d="M-20.6 -24.6 q-1.1 3.1 0 6.2" stroke="#2c5888" stroke-width="0.9" opacity="0.28" fill="none"/><path d="M-20.6 47.4 q-1.1 3.1 0 6.2" stroke="#2c5888" stroke-width="0.9" opacity="0.28" fill="none"/><path d="M39.4 11.4 q-1.1 3.1 0 6.2" stroke="#2c5888" stroke-width="0.9" opacity="0.28" fill="none"/><path d="M39.4 -24.6 q-1.1 3.1 0 6.2" stroke="#2c5888" stroke-width="0.9" opacity="0.28" fill="none"/><path d="M39.4 47.4 q-1.1 3.1 0 6.2" stroke="#2c5888" stroke-width="0.9" opacity="0.28" fill="none"/><path d="M4.8 1.7 q-0.3 6.0 0 11.9" stroke="#2c5888" stroke-width="1.2" opacity="0.22" fill="none"/><path d="M4.8 -34.3 q-0.3 6.0 0 11.9" stroke="#2c5888" stroke-width="1.2" opacity="0.22" fill="none"/><path d="M4.8 37.7 q-0.3 6.0 0 11.9" stroke="#2c5888" stroke-width="1.2" opacity="0.22" fill="none"/><path d="M-25.2 1.7 q-0.3 6.0 0 11.9" stroke="#2c5888" stroke-width="1.2" opacity="0.22" fill="none"/><path d="M-25.2 -34.3 q-0.3 6.0 0 11.9" stroke="#2c5888" stroke-width="1.2" opacity="0.22" fill="none"/><path d="M-25.2 37.7 q-0.3 6.0 0 11.9" stroke="#2c5888" stroke-width="1.2" opacity="0.22" fill="none"/><path d="M34.8 1.7 q-0.3 6.0 0 11.9" stroke="#2c5888" stroke-width="1.2" opacity="0.22" fill="none"/><path d="M34.8 -34.3 q-0.3 6.0 0 11.9" stroke="#2c5888" stroke-width="1.2" opacity="0.22" fill="none"/><path d="M34.8 37.7 q-0.3 6.0 0 11.9" stroke="#2c5888" stroke-width="1.2" opacity="0.22" fill="none"/><path d="M24.8 16.4 q1.2 4.0 0 8.0" stroke="#2c5888" stroke-width="0.8" opacity="0.20" fill="none"/><path d="M24.8 -19.6 q1.2 4.0 0 8.0" stroke="#2c5888" stroke-width="0.8" opacity="0.20" fill="none"/><path d="M24.8 52.4 q1.2 4.0 0 8.0" stroke="#2c5888" stroke-width="0.8" opacity="0.20" fill="none"/><path d="M-5.2 16.4 q1.2 4.0 0 8.0" stroke="#2c5888" stroke-width="0.8" opacity="0.20" fill="none"/><path d="M-5.2 -19.6 q1.2 4.0 0 8.0" stroke="#2c5888" stroke-width="0.8" opacity="0.20" fill="none"/><path d="M-5.2 52.4 q1.2 4.0 0 8.0" stroke="#2c5888" stroke-width="0.8" opacity="0.20" fill="none"/><path d="M54.8 16.4 q1.2 4.0 0 8.0" stroke="#2c5888" stroke-width="0.8" opacity="0.20" fill="none"/><path d="M54.8 -19.6 q1.2 4.0 0 8.0" stroke="#2c5888" stroke-width="0.8" opacity="0.20" fill="none"/><path d="M54.8 52.4 q1.2 4.0 0 8.0" stroke="#2c5888" stroke-width="0.8" opacity="0.20" fill="none"/><path d="M25.2 4.7 q0.4 5.1 0 10.1" stroke="#6090c0" stroke-width="1.6" opacity="0.14" fill="none"/><path d="M25.2 -31.3 q0.4 5.1 0 10.1" stroke="#6090c0" stroke-width="1.6" opacity="0.14" fill="none"/><path d="M25.2 40.7 q0.4 5.1 0 10.1" stroke="#6090c0" stroke-width="1.6" opacity="0.14" fill="none"/><path d="M-4.8 4.7 q0.4 5.1 0 10.1" stroke="#6090c0" stroke-width="1.6" opacity="0.14" fill="none"/><path d="M-4.8 -31.3 q0.4 5.1 0 10.1" stroke="#6090c0" stroke-width="1.6" opacity="0.14" fill="none"/><path d="M-4.8 40.7 q0.4 5.1 0 10.1" stroke="#6090c0" stroke-width="1.6" opacity="0.14" fill="none"/><path d="M55.2 4.7 q0.4 5.1 0 10.1" stroke="#6090c0" stroke-width="1.6" opacity="0.14" fill="none"/><path d="M55.2 -31.3 q0.4 5.1 0 10.1" stroke="#6090c0" stroke-width="1.6" opacity="0.14" fill="none"/><path d="M55.2 40.7 q0.4 5.1 0 10.1" stroke="#6090c0" stroke-width="1.6" opacity="0.14" fill="none"/><path d="M13.0 5.4 q-0.1 5.5 0 10.9" stroke="#6090c0" stroke-width="1.0" opacity="0.26" fill="none"/><path d="M13.0 -30.6 q-0.1 5.5 0 10.9" stroke="#6090c0" stroke-width="1.0" opacity="0.26" fill="none"/><path d="M13.0 41.4 q-0.1 5.5 0 10.9" stroke="#6090c0" stroke-width="1.0" opacity="0.26" fill="none"/><path d="M-17.0 5.4 q-0.1 5.5 0 10.9" stroke="#6090c0" stroke-width="1.0" opacity="0.26" fill="none"/><path d="M-17.0 -30.6 q-0.1 5.5 0 10.9" stroke="#6090c0" stroke-width="1.0" opacity="0.26" fill="none"/><path d="M-17.0 41.4 q-0.1 5.5 0 10.9" stroke="#6090c0" stroke-width="1.0" opacity="0.26" fill="none"/><path d="M43.0 5.4 q-0.1 5.5 0 10.9" stroke="#6090c0" stroke-width="1.0" opacity="0.26" fill="none"/><path d="M43.0 -30.6 q-0.1 5.5 0 10.9" stroke="#6090c0" stroke-width="1.0" opacity="0.26" fill="none"/><path d="M43.0 41.4 q-0.1 5.5 0 10.9" stroke="#6090c0" stroke-width="1.0" opacity="0.26" fill="none"/><path d="M29.3 16.3 q-0.1 4.2 0 8.4" stroke="#2c5888" stroke-width="1.4" opacity="0.18" fill="none"/><path d="M29.3 -19.7 q-0.1 4.2 0 8.4" stroke="#2c5888" stroke-width="1.4" opacity="0.18" fill="none"/><path d="M29.3 52.3 q-0.1 4.2 0 8.4" stroke="#2c5888" stroke-width="1.4" opacity="0.18" fill="none"/><path d="M-0.7 16.3 q-0.1 4.2 0 8.4" stroke="#2c5888" stroke-width="1.4" opacity="0.18" fill="none"/><path d="M-0.7 -19.7 q-0.1 4.2 0 8.4" stroke="#2c5888" stroke-width="1.4" opacity="0.18" fill="none"/><path d="M-0.7 52.3 q-0.1 4.2 0 8.4" stroke="#2c5888" stroke-width="1.4" opacity="0.18" fill="none"/><path d="M59.3 16.3 q-0.1 4.2 0 8.4" stroke="#2c5888" stroke-width="1.4" opacity="0.18" fill="none"/><path d="M59.3 -19.7 q-0.1 4.2 0 8.4" stroke="#2c5888" stroke-width="1.4" opacity="0.18" fill="none"/><path d="M59.3 52.3 q-0.1 4.2 0 8.4" stroke="#2c5888" stroke-width="1.4" opacity="0.18" fill="none"/><path d="M4.4 13.6 q0.4 6.0 0 11.9" stroke="#2c5888" stroke-width="1.6" opacity="0.17" fill="none"/><path d="M4.4 -22.4 q0.4 6.0 0 11.9" stroke="#2c5888" stroke-width="1.6" opacity="0.17" fill="none"/><path d="M4.4 49.6 q0.4 6.0 0 11.9" stroke="#2c5888" stroke-width="1.6" opacity="0.17" fill="none"/><path d="M-25.6 13.6 q0.4 6.0 0 11.9" stroke="#2c5888" stroke-width="1.6" opacity="0.17" fill="none"/><path d="M-25.6 -22.4 q0.4 6.0 0 11.9" stroke="#2c5888" stroke-width="1.6" opacity="0.17" fill="none"/><path d="M-25.6 49.6 q0.4 6.0 0 11.9" stroke="#2c5888" stroke-width="1.6" opacity="0.17" fill="none"/><path d="M34.4 13.6 q0.4 6.0 0 11.9" stroke="#2c5888" stroke-width="1.6" opacity="0.17" fill="none"/><path d="M34.4 -22.4 q0.4 6.0 0 11.9" stroke="#2c5888" stroke-width="1.6" opacity="0.17" fill="none"/><path d="M34.4 49.6 q0.4 6.0 0 11.9" stroke="#2c5888" stroke-width="1.6" opacity="0.17" fill="none"/><path d="M2.7 9.8 q-0.4 5.2 0 10.5" stroke="#6090c0" stroke-width="1.5" opacity="0.24" fill="none"/><path d="M2.7 -26.2 q-0.4 5.2 0 10.5" stroke="#6090c0" stroke-width="1.5" opacity="0.24" fill="none"/><path d="M2.7 45.8 q-0.4 5.2 0 10.5" stroke="#6090c0" stroke-width="1.5" opacity="0.24" fill="none"/><path d="M-27.3 9.8 q-0.4 5.2 0 10.5" stroke="#6090c0" stroke-width="1.5" opacity="0.24" fill="none"/><path d="M-27.3 -26.2 q-0.4 5.2 0 10.5" stroke="#6090c0" stroke-width="1.5" opacity="0.24" fill="none"/><path d="M-27.3 45.8 q-0.4 5.2 0 10.5" stroke="#6090c0" stroke-width="1.5" opacity="0.24" fill="none"/><path d="M32.7 9.8 q-0.4 5.2 0 10.5" stroke="#6090c0" stroke-width="1.5" opacity="0.24" fill="none"/><path d="M32.7 -26.2 q-0.4 5.2 0 10.5" stroke="#6090c0" stroke-width="1.5" opacity="0.24" fill="none"/><path d="M32.7 45.8 q-0.4 5.2 0 10.5" stroke="#6090c0" stroke-width="1.5" opacity="0.24" fill="none"/><path d="M20.8 23.9 q0.6 5.2 0 10.3" stroke="#2c5888" stroke-width="1.1" opacity="0.20" fill="none"/><path d="M20.8 -12.1 q0.6 5.2 0 10.3" stroke="#2c5888" stroke-width="1.1" opacity="0.20" fill="none"/><path d="M20.8 59.9 q0.6 5.2 0 10.3" stroke="#2c5888" stroke-width="1.1" opacity="0.20" fill="none"/><path d="M-9.2 23.9 q0.6 5.2 0 10.3" stroke="#2c5888" stroke-width="1.1" opacity="0.20" fill="none"/><path d="M-9.2 -12.1 q0.6 5.2 0 10.3" stroke="#2c5888" stroke-width="1.1" opacity="0.20" fill="none"/><path d="M-9.2 59.9 q0.6 5.2 0 10.3" stroke="#2c5888" stroke-width="1.1" opacity="0.20" fill="none"/><path d="M50.8 23.9 q0.6 5.2 0 10.3" stroke="#2c5888" stroke-width="1.1" opacity="0.20" fill="none"/><path d="M50.8 -12.1 q0.6 5.2 0 10.3" stroke="#2c5888" stroke-width="1.1" opacity="0.20" fill="none"/><path d="M50.8 59.9 q0.6 5.2 0 10.3" stroke="#2c5888" stroke-width="1.1" opacity="0.20" fill="none"/><path d="M23.1 24.9 q0.4 3.5 0 7.1" stroke="#2c5888" stroke-width="1.6" opacity="0.12" fill="none"/><path d="M23.1 -11.1 q0.4 3.5 0 7.1" stroke="#2c5888" stroke-width="1.6" opacity="0.12" fill="none"/><path d="M23.1 60.9 q0.4 3.5 0 7.1" stroke="#2c5888" stroke-width="1.6" opacity="0.12" fill="none"/><path d="M-6.9 24.9 q0.4 3.5 0 7.1" stroke="#2c5888" stroke-width="1.6" opacity="0.12" fill="none"/><path d="M-6.9 -11.1 q0.4 3.5 0 7.1" stroke="#2c5888" stroke-width="1.6" opacity="0.12" fill="none"/><path d="M-6.9 60.9 q0.4 3.5 0 7.1" stroke="#2c5888" stroke-width="1.6" opacity="0.12" fill="none"/><path d="M53.1 24.9 q0.4 3.5 0 7.1" stroke="#2c5888" stroke-width="1.6" opacity="0.12" fill="none"/><path d="M53.1 -11.1 q0.4 3.5 0 7.1" stroke="#2c5888" stroke-width="1.6" opacity="0.12" fill="none"/><path d="M53.1 60.9 q0.4 3.5 0 7.1" stroke="#2c5888" stroke-width="1.6" opacity="0.12" fill="none"/><path d="M16.4 9.0 q1.0 4.9 0 9.7" stroke="#2c5888" stroke-width="1.2" opacity="0.25" fill="none"/><path d="M16.4 -27.0 q1.0 4.9 0 9.7" stroke="#2c5888" stroke-width="1.2" opacity="0.25" fill="none"/><path d="M16.4 45.0 q1.0 4.9 0 9.7" stroke="#2c5888" stroke-width="1.2" opacity="0.25" fill="none"/><path d="M-13.6 9.0 q1.0 4.9 0 9.7" stroke="#2c5888" stroke-width="1.2" opacity="0.25" fill="none"/><path d="M-13.6 -27.0 q1.0 4.9 0 9.7" stroke="#2c5888" stroke-width="1.2" opacity="0.25" fill="none"/><path d="M-13.6 45.0 q1.0 4.9 0 9.7" stroke="#2c5888" stroke-width="1.2" opacity="0.25" fill="none"/><path d="M46.4 9.0 q1.0 4.9 0 9.7" stroke="#2c5888" stroke-width="1.2" opacity="0.25" fill="none"/><path d="M46.4 -27.0 q1.0 4.9 0 9.7" stroke="#2c5888" stroke-width="1.2" opacity="0.25" fill="none"/><path d="M46.4 45.0 q1.0 4.9 0 9.7" stroke="#2c5888" stroke-width="1.2" opacity="0.25" fill="none"/><path d="M10.4 23.2 q-0.4 5.1 0 10.2" stroke="#6090c0" stroke-width="1.5" opacity="0.26" fill="none"/><path d="M10.4 -12.8 q-0.4 5.1 0 10.2" stroke="#6090c0" stroke-width="1.5" opacity="0.26" fill="none"/><path d="M10.4 59.2 q-0.4 5.1 0 10.2" stroke="#6090c0" stroke-width="1.5" opacity="0.26" fill="none"/><path d="M-19.6 23.2 q-0.4 5.1 0 10.2" stroke="#6090c0" stroke-width="1.5" opacity="0.26" fill="none"/><path d="M-19.6 -12.8 q-0.4 5.1 0 10.2" stroke="#6090c0" stroke-width="1.5" opacity="0.26" fill="none"/><path d="M-19.6 59.2 q-0.4 5.1 0 10.2" stroke="#6090c0" stroke-width="1.5" opacity="0.26" fill="none"/><path d="M40.4 23.2 q-0.4 5.1 0 10.2" stroke="#6090c0" stroke-width="1.5" opacity="0.26" fill="none"/><path d="M40.4 -12.8 q-0.4 5.1 0 10.2" stroke="#6090c0" stroke-width="1.5" opacity="0.26" fill="none"/><path d="M40.4 59.2 q-0.4 5.1 0 10.2" stroke="#6090c0" stroke-width="1.5" opacity="0.26" fill="none"/><path d="M20.7 35.1 q0.1 5.8 0 11.7" stroke="#2c5888" stroke-width="1.2" opacity="0.25" fill="none"/><path d="M20.7 -0.9 q0.1 5.8 0 11.7" stroke="#2c5888" stroke-width="1.2" opacity="0.25" fill="none"/><path d="M20.7 71.1 q0.1 5.8 0 11.7" stroke="#2c5888" stroke-width="1.2" opacity="0.25" fill="none"/><path d="M-9.3 35.1 q0.1 5.8 0 11.7" stroke="#2c5888" stroke-width="1.2" opacity="0.25" fill="none"/><path d="M-9.3 -0.9 q0.1 5.8 0 11.7" stroke="#2c5888" stroke-width="1.2" opacity="0.25" fill="none"/><path d="M-9.3 71.1 q0.1 5.8 0 11.7" stroke="#2c5888" stroke-width="1.2" opacity="0.25" fill="none"/><path d="M50.7 35.1 q0.1 5.8 0 11.7" stroke="#2c5888" stroke-width="1.2" opacity="0.25" fill="none"/><path d="M50.7 -0.9 q0.1 5.8 0 11.7" stroke="#2c5888" stroke-width="1.2" opacity="0.25" fill="none"/><path d="M50.7 71.1 q0.1 5.8 0 11.7" stroke="#2c5888" stroke-width="1.2" opacity="0.25" fill="none"/></pattern>
</defs>
<!-- arms -->
<path d="M540 340 L498 334 Q482 350 470 365 Q458 382 447 396 Q432 412 420 425 Q406 438 394 451 L394 490 Q400 478 406 470 L408 462 Q428 444 448 428 Q466 414 486 402 Q506 382 525 361Z" fill="url(#armG)"/>
<path d="M716 340 L758 334 Q774 350 786 365 Q798 382 809 396 Q824 412 836 425 Q850 438 862 451 L862 490 Q856 478 850 470 L848 462 Q828 444 808 428 Q790 414 770 402 Q750 382 731 361Z" fill="url(#armG)"/>
<!-- legs -->
<path d="M548 512 Q544 560 551 600 Q560 660 565 703 Q556 745 560 790 Q566 850 573 885 Q570 910 566 930 L600 932 Q598 905 600 885 Q607 820 608 760 Q611 725 611 703 Q618 650 623 600 Q626 560 627 545 L628 512Z" fill="url(#skinL)"/>
<path d="M708 512 Q712 560 705 600 Q696 660 691 703 Q700 745 696 790 Q690 850 683 885 Q686 910 690 930 L656 932 Q658 905 656 885 Q649 820 648 760 Q645 725 645 703 Q638 650 633 600 Q630 560 629 545 L628 512Z" fill="url(#skinL)"/>
<path d="M600 512 Q616 530 628 538 Q640 530 656 512Z" fill="#dcbda2"/><path d="M547.2 498 L551 498 L549 533 L544.8 533Z M705 498 L708.8 498 L711.2 533 L707 533Z" fill="#2c4f7a"/>
<!-- shoes -->
<path d="M601 886 Q605 905 603 932 L600.5 932 Q602 905 599 888Z" fill="#a49c88" opacity="0.45"/><path d="M563 934 Q561 952 568 957 L601 957 Q607 952 605 934 Q584 926 563 934Z" fill="url(#shoeG)"/><g fill="#e2b9a4"><ellipse cx="580" cy="943" rx="3.2" ry="3.5"/><ellipse cx="586" cy="942" rx="2.8" ry="3.5"/><ellipse cx="591.5" cy="943.5" rx="3" ry="3.3"/></g><path d="M565 950 Q584 953 604 950" stroke="#9a927e" stroke-width="1" fill="none"/>
<path d="M655 886 Q651 905 653 932 L655.5 932 Q654 905 657 888Z" fill="#a49c88" opacity="0.45"/><path d="M651 934 Q649 952 656 957 L689 957 Q695 952 693 934 Q672 926 651 934Z" fill="url(#shoeG)"/><g fill="#e2b9a4"><ellipse cx="664.5" cy="943.5" rx="3" ry="3.3"/><ellipse cx="670" cy="942" rx="2.8" ry="3.5"/><ellipse cx="676" cy="943" rx="3.2" ry="3.5"/></g><path d="M652 950 Q672 953 692 950" stroke="#9a927e" stroke-width="1" fill="none"/>
<!-- neck -->
<path d="M608 200 L649 200 Q648 232 662 246 L682 255 L682 290 L575 290 L575 255 L594 246 Q608 232 608 200Z" fill="#dfb7a0"/>
<!-- shirt -->
<path d="M576 254 Q628 292 684 255 Q712 262 735 292 Q757 313 769 323 Q755 350 702 384 Q704 450 709 511 L704 513 L553 513 L548 511 Q552 450 551 376 Q510 352 489 323 Q499 313 521 292 Q544 262 576 254Z" fill="url(#shirtG)"/>
<path d="M576 254 Q628 292 684 255 Q712 262 735 292 Q757 313 769 323 Q755 350 702 384 Q704 450 709 511 L704 513 L553 513 L548 511 Q552 450 551 376 Q510 352 489 323 Q499 313 521 292 Q544 262 576 254Z" fill="url(#fur)"/>
<path d="M489 323 Q520 352 551 376 L558 368 Q526 345 496 315Z" fill="#2a5482" opacity="0.28"/>
<path d="M767 323 Q736 352 705 376 L698 368 Q730 345 760 315Z" fill="#2a5482" opacity="0.28"/>
<path d="M496 315 Q526 345 558 368" stroke="#2f5f92" stroke-width="0.8" fill="none" opacity="0.6"/>
<path d="M760 315 Q730 345 698 368" stroke="#2f5f92" stroke-width="0.8" fill="none" opacity="0.6"/>
<path d="M551 376 Q553 430 548 511 L560 511 Q566 440 558 380Z" fill="#2a5482" opacity="0.15"/>
<path d="M702 384 Q704 450 709 511 L697 511 Q692 440 695 388Z" fill="#2a5482" opacity="0.15"/>
<g stroke="#9a80e0" stroke-width="1" fill="none" opacity="0.9">
<path d="M580 256 Q628 285 681 257"/>
<path d="M628 275 V513"/>
<path d="M542 337 Q628 315 718 340"/>
<path d="M556 369 Q628 364 708 369"/>
<circle cx="628" cy="403.5" r="9.3"/><circle cx="628" cy="403.5" r="5"/>
</g>
<!-- head -->
<path d="M628 120 Q590 122 587 165 Q584 200 590 225 L606 225 L604 180 Q610 140 628 138 Q648 140 654 180 L652 225 L670 225 Q674 200 671 165 Q666 122 628 120Z" fill="#231f1d"/>
<path d="M628 140 Q599 140 597 172 Q597 197 611 210 Q620 217.5 628 217.5 Q636 217.5 645 210 Q659 197 659 172 Q657 140 628 140Z" fill="#e8c2aa"/>
<path d="M597 176 Q596 140 628 137 Q660 140 660 176 Q655 145 628 143 Q603 145 597 176Z" fill="#2a2421"/>
<path d="M597 165 Q600 130 628 128 Q656 130 659 165 Q652 138 628 136 Q604 138 597 165Z" fill="#2a2421"/>
<ellipse cx="594" cy="183" rx="4" ry="9" fill="#d9ae96"/>
<ellipse cx="662" cy="183" rx="4" ry="9" fill="#d9ae96"/>
<g fill="#4a3228"><ellipse cx="614" cy="170" rx="4.5" ry="2"/><ellipse cx="642" cy="170" rx="4.5" ry="2"/></g><g stroke="#7a5a4a" stroke-width="1.2" fill="none" opacity="0.7"><path d="M607 163 Q613 160 620 162"/><path d="M636 162 Q643 160 649 163"/></g><g fill="#e8a090" opacity="0.18"><ellipse cx="611" cy="186" rx="7" ry="5"/><ellipse cx="645" cy="186" rx="7" ry="5"/></g>
<path d="M619 200 Q628 196 637 200 Q628 205 619 200Z" fill="#d97870"/>
<path d="M628 178 L625 190 Q628 193 631 190Z" fill="#d8ab92"/>
</svg>
<!-- floating toolbar -->
<div class="a" style="left:10px;top:10px;width:32px;height:66px;background:#454548;border-radius:8px"></div>
<div class="a" style="left:10px;top:82px;width:32px;height:96px;background:#454548;border-radius:8px"></div>
<div class="a" style="left:10px;top:184px;width:32px;height:125px;background:#454548;border-radius:8px"></div>
<svg class="a" style="left:16px;top:18px" width="20" height="20" viewBox="0 0 20 20"><path d="M10 2 L18 6 V14 L10 18 L2 14 V6Z" fill="#a8a8aa"/><path d="M2 6 L10 10 L18 6 L10 2Z" fill="#d8d8da"/><path d="M10 10 V18 L18 14 V6Z" fill="#707072"/><circle cx="3" cy="16" r="2" fill="#bbb"/></svg>
<svg class="a" style="left:16px;top:48px" width="20" height="20" viewBox="0 0 20 20"><path d="M6 3 L2 7 L5 10 L6 9 V17 H14 V9 L15 10 L18 7 L14 3 Q10 6 6 3Z" fill="#8a8a8c"/><circle cx="3" cy="17" r="2" fill="#bbb"/><circle cx="12" cy="9" r="2" fill="none" stroke="#555"/></svg>
<svg class="a" style="left:16px;top:89px" width="20" height="20" viewBox="0 0 20 20"><path d="M6 2 L1 6 L4 10 L5.5 9 V18 H14.5 V9 L16 10 L19 6 L14 2 Q10 5 6 2Z" fill="#f2f2f2"/></svg>
<svg class="a" style="left:16px;top:120px" width="20" height="20" viewBox="0 0 20 20"><circle cx="5" cy="12" r="4" fill="#e8e8e8"/><path d="M10 10 L13 8 L17 10 V18 H10Z" fill="#e8e8e8"/><path d="M6 9 L17 2" stroke="#ddd" stroke-width="0.8"/></svg>
<svg class="a" style="left:16px;top:150px" width="20" height="20" viewBox="0 0 20 20"><circle cx="10" cy="6" r="4.5" fill="#f0f0f0"/><path d="M2 18 Q2 11 10 11 Q18 11 18 18Z" fill="#f0f0f0"/></svg>
<svg class="a" style="left:16px;top:191px" width="20" height="20" viewBox="0 0 20 20"><path d="M3 6 L10 5 L9 16 Q5 14 2 16Z" fill="#c8c8c8"/><path d="M7 4 Q13 1 19 2 L16 14 Q12 13 8 16Z" fill="#2a8ef0"/></svg>
<svg class="a" style="left:16px;top:221px" width="20" height="20" viewBox="0 0 20 20"><path d="M3 7 L17 3 L15 15 Q10 14 4 17Z" fill="#2a2a2c"/><path d="M6 5 Q12 3 17 3 L15 15" fill="none" stroke="#bbb" stroke-width="1"/></svg>
<svg class="a" style="left:16px;top:251px" width="20" height="20" viewBox="0 0 20 20"><ellipse cx="10" cy="8" rx="5" ry="6" fill="#f0c8a8"/><path d="M3 19 Q4 13 10 13 Q16 13 17 19Z" fill="#f0c8a8"/></svg>
<svg class="a" style="left:16px;top:280px" width="20" height="20" viewBox="0 0 20 20"><g fill="none" stroke="#e8e8e8" stroke-width="1"><circle cx="10" cy="10" r="8"/><ellipse cx="10" cy="10" rx="4" ry="8"/><path d="M2 10 H18 M3 6 H17 M3 14 H17 M10 2 V18"/></g></svg>
</div>

<!-- 2D title -->
<div class="a" style="left:869px;top:43px;width:700px;height:20px;background:#1f1f22"></div>
<!-- 2D viewport -->
<div class="a" style="left:871px;top:65px;width:620px;height:939px;overflow:hidden;background:#c8c8c8">
<svg class="a" style="left:0;top:0" width="620" height="939" viewBox="871 65 620 939">
<defs>
<pattern id="fur2" width="7" height="12" patternUnits="userSpaceOnUse"><rect width="7" height="12" fill="#5283b8"/><path d="M1 0 L1.6 12 M4.5 2 L4.8 11" stroke="#3f70a5" stroke-width="0.8" opacity="0.5"/></pattern>
</defs>
<g stroke="#bdbdbd" stroke-width="1"><line x1="875.50" y1="65" x2="875.50" y2="1003"/>
<line x1="906.75" y1="65" x2="906.75" y2="1003"/>
<line x1="938.00" y1="65" x2="938.00" y2="1003"/>
<line x1="969.25" y1="65" x2="969.25" y2="1003"/>
<line x1="1000.50" y1="65" x2="1000.50" y2="1003"/>
<line x1="1031.75" y1="65" x2="1031.75" y2="1003"/>
<line x1="1063.00" y1="65" x2="1063.00" y2="1003"/>
<line x1="1094.25" y1="65" x2="1094.25" y2="1003"/>
<line x1="1156.75" y1="65" x2="1156.75" y2="1003"/>
<line x1="1188.00" y1="65" x2="1188.00" y2="1003"/>
<line x1="1219.25" y1="65" x2="1219.25" y2="1003"/>
<line x1="1250.50" y1="65" x2="1250.50" y2="1003"/>
<line x1="1281.75" y1="65" x2="1281.75" y2="1003"/>
<line x1="1313.00" y1="65" x2="1313.00" y2="1003"/>
<line x1="1344.25" y1="65" x2="1344.25" y2="1003"/>
<line x1="1375.50" y1="65" x2="1375.50" y2="1003"/>
<line x1="1406.75" y1="65" x2="1406.75" y2="1003"/>
<line x1="1438.00" y1="65" x2="1438.00" y2="1003"/>
<line x1="1469.25" y1="65" x2="1469.25" y2="1003"/>
<line x1="871" y1="88.50" x2="1491" y2="88.50"/>
<line x1="871" y1="119.75" x2="1491" y2="119.75"/>
<line x1="871" y1="151.00" x2="1491" y2="151.00"/>
<line x1="871" y1="182.25" x2="1491" y2="182.25"/>
<line x1="871" y1="213.50" x2="1491" y2="213.50"/>
<line x1="871" y1="244.75" x2="1491" y2="244.75"/>
<line x1="871" y1="276.00" x2="1491" y2="276.00"/>
<line x1="871" y1="307.25" x2="1491" y2="307.25"/>
<line x1="871" y1="338.50" x2="1491" y2="338.50"/>
<line x1="871" y1="369.75" x2="1491" y2="369.75"/>
<line x1="871" y1="401.00" x2="1491" y2="401.00"/>
<line x1="871" y1="432.25" x2="1491" y2="432.25"/>
<line x1="871" y1="463.50" x2="1491" y2="463.50"/>
<line x1="871" y1="494.75" x2="1491" y2="494.75"/>
<line x1="871" y1="526.00" x2="1491" y2="526.00"/>
<line x1="871" y1="557.25" x2="1491" y2="557.25"/>
<line x1="871" y1="588.50" x2="1491" y2="588.50"/>
<line x1="871" y1="619.75" x2="1491" y2="619.75"/>
<line x1="871" y1="651.00" x2="1491" y2="651.00"/>
<line x1="871" y1="682.25" x2="1491" y2="682.25"/>
<line x1="871" y1="713.50" x2="1491" y2="713.50"/>
<line x1="871" y1="744.75" x2="1491" y2="744.75"/>
<line x1="871" y1="776.00" x2="1491" y2="776.00"/>
<line x1="871" y1="807.25" x2="1491" y2="807.25"/>
<line x1="871" y1="838.50" x2="1491" y2="838.50"/>
<line x1="871" y1="869.75" x2="1491" y2="869.75"/>
<line x1="871" y1="932.25" x2="1491" y2="932.25"/>
<line x1="871" y1="963.50" x2="1491" y2="963.50"/>
<line x1="871" y1="994.75" x2="1491" y2="994.75"/></g>
<line x1="1125.5" y1="65" x2="1125.5" y2="1003" stroke="#8e8e8e" stroke-width="1.5"/>
<line x1="871" y1="901" x2="1491" y2="901" stroke="#8e8e8e" stroke-width="1.5"/>
<!-- silhouette -->
<g fill="#bababa">
<path d="M1126 319.2 C1108 319.2 1098 326 1096.3 338.5 L1095.5 388.4 Q1103 392 1110.5 394.5 L1110.5 401 Q1100 410 1075 423 Q1055 432 1041 442 Q1000 500 967 552 Q950 575 935 598 Q945 596 956 587 Q966 575 976 561 Q1020 520 1059 487 L1062 540 Q1064 580 1068.7 609 Q1071 630 1074.5 650 Q1078 675 1080 700 Q1079 720 1078.8 740 Q1078 760 1078 770 Q1081 795 1084.5 820 Q1086 835 1087.4 850 L1083 865 Q1081 880 1081.7 900 L1109 900 Q1110 880 1109 865 L1104.7 850 Q1104.7 835 1104.7 820 Q1107 795 1110 770 L1110.4 740 Q1113 720 1116 700 Q1119 675 1121.9 650 Q1123.5 630 1124.8 609 L1127.6 609 Q1131 650 1134.8 700 Q1138 720 1140.6 740 Q1143 780 1146 820 L1146 850 L1142 865 Q1141 880 1142 900 L1169 900 Q1168 880 1165 865 L1166.4 850 Q1166 835 1166.4 820 Q1170 780 1173.6 740 Q1174 720 1175 700 Q1179 650 1182 609 Q1188 580 1190 540 L1193 487 Q1232 520 1276 561 Q1286 575 1296 587 Q1307 596 1317 598 Q1302 575 1285 552 Q1252 500 1211 442 Q1197 432 1177 423 Q1152 410 1141.5 401 L1141.5 394.5 Q1149 392 1156.5 388.4 L1155.7 338.5 C1154 326 1144 319.2 1126 319.2Z"/>
</g>
<line x1="1125.5" y1="65" x2="1125.5" y2="1003" stroke="#8e8e8e" stroke-width="1.5"/>
<!-- connection line -->
<line x1="1014" y1="646" x2="1169" y2="646" stroke="#7e94aa" stroke-width="1.5"/>
<!-- front piece -->
<path d="M1042 443 L1074 420 L1097 413 Q1105 438 1134 439 Q1162 438 1169 412 L1193 421 L1225 443 Q1208 480 1207 509 L1207 609 L1061 609 L1061 509 Q1058 480 1042 443Z" fill="url(#fur2)"/>
<path d="M1134 439 Q1162 438 1169 412 L1193 421 L1225 443 Q1208 480 1207 509 L1207 609 L1134 609" fill="none" stroke="#2c2c2c" stroke-width="1.2"/>
<path d="M1134 439 Q1105 438 1097 413 L1074 420 L1042 443 Q1058 480 1061 509 L1061 609 L1134 609" fill="none" stroke="#6f8fc0" stroke-width="0.8"/>
<line x1="1134" y1="439" x2="1134" y2="609" stroke="#111" stroke-width="2.4" stroke-dasharray="3 2.5"/>
<line x1="1134" y1="441.5" x2="1134" y2="609" stroke="#dfe8f0" stroke-width="1" stroke-dasharray="2.5 3"/>
<g stroke="#a07fe0" stroke-width="0.6" stroke-dasharray="2 2" opacity="0.8"><line x1="1062" y1="481" x2="1206" y2="481"/><line x1="1062" y1="510" x2="1206" y2="510"/></g>
<!-- back piece -->
<path d="M1307 444 L1330 421 L1361 414 Q1370 422 1397 422 Q1423 422 1432 413 L1455 421 L1488 444 Q1472 480 1472 511 L1472 622 L1323 622 L1323 511 Q1322 480 1307 444Z" fill="url(#fur2)"/>
<path d="M1307 444 L1330 421 L1361 414 Q1370 422 1397 422 Q1423 422 1432 413 L1455 421 L1488 444 Q1472 480 1472 511 L1472 622 L1323 622 L1323 511 Q1322 480 1307 444Z" fill="none" stroke="#6f8fc0" stroke-width="0.8"/>
<path d="M1432 413 L1455 421 L1488 444 Q1472 480 1472 511 L1472 622 L1397 622" fill="none" stroke="#2c2c2c" stroke-width="1.2"/>
<line x1="1397" y1="422" x2="1397" y2="622" stroke="#111" stroke-width="2.4" stroke-dasharray="3 2.5"/>
<line x1="1397" y1="424.5" x2="1397" y2="622" stroke="#dfe8f0" stroke-width="1" stroke-dasharray="2.5 3"/>
<g stroke="#a07fe0" stroke-width="0.6" stroke-dasharray="2 2" opacity="0.8"><line x1="1324" y1="482" x2="1471" y2="482"/><line x1="1324" y1="511" x2="1471" y2="511"/></g>
<!-- sleeve hems -->
<path d="M874 645.5 Q944 619.5 1014 645.5" fill="none" stroke="#7db2e6" stroke-width="4.5"/>
<path d="M874 659.3 H1014" stroke="#7db2e6" stroke-width="3.6"/>
<path d="M871.5 648 V657" stroke="#7db2e6" stroke-width="5"/><path d="M1016.5 648 V657" stroke="#7db2e6" stroke-width="5"/>
<path d="M874 648.3 Q944 622.5 1014 648.3 L1014 656.3 L874 656.3Z" fill="url(#fur2)" stroke="#2c2c2c" stroke-width="1"/>
<path d="M1169.6 645.5 Q1239.6 619.5 1309.6 645.5" fill="none" stroke="#7db2e6" stroke-width="4.5"/>
<path d="M1169.6 659.3 H1309.6" stroke="#7db2e6" stroke-width="3.6"/>
<path d="M1167.1 648 V657" stroke="#7db2e6" stroke-width="5"/><path d="M1312.1 648 V657" stroke="#7db2e6" stroke-width="5"/>
<path d="M1169.6 648.3 Q1239.6 622.5 1309.6 648.3 L1309.6 656.3 L1169.6 656.3Z" fill="url(#fur2)" stroke="#2c2c2c" stroke-width="1"/>
<!-- notches -->
<g stroke="#e01818" stroke-width="1.6">
<path d="M1055 470 L1066 467"/><path d="M1059 509 L1070 509"/><path d="M1060 592 L1071 592"/>
<path d="M1213 467 L1202 470"/><path d="M1208 509 L1198 509"/><path d="M1208 592 L1197 592"/>
<path d="M1319 472 L1331 469"/><path d="M1323 511 L1333 511"/><path d="M1323 592 L1333 592"/>
<path d="M1477 469 L1466 472"/><path d="M1472 511 L1462 511"/><path d="M1472 592 L1462 592"/>
<path d="M910 638.5 L912 649"/><path d="M944 636.5 L944 646"/><path d="M978 638.5 L976 649"/>
<path d="M1205.6 638.5 L1207.8 649"/><path d="M1239.6 636.5 L1239.6 646"/><path d="M1273 638.5 L1271 649"/>
</g>
<g fill="#333"><circle cx="1042" cy="443" r="1.6"/><circle cx="1074" cy="420" r="1.6"/><circle cx="1097" cy="413" r="1.6"/><circle cx="1169" cy="412" r="1.6"/><circle cx="1193" cy="421" r="1.6"/><circle cx="1225" cy="443" r="1.6"/><circle cx="1061" cy="609" r="1.6"/><circle cx="1207" cy="609" r="1.6"/><circle cx="1134" cy="609" r="1.6"/>
<circle cx="1307" cy="444" r="1.6"/><circle cx="1330" cy="421" r="1.6"/><circle cx="1361" cy="414" r="1.6"/><circle cx="1397" cy="422" r="1.6"/><circle cx="1432" cy="413" r="1.6"/><circle cx="1455" cy="421" r="1.6"/><circle cx="1488" cy="444" r="1.6"/><circle cx="1323" cy="622" r="1.6"/><circle cx="1472" cy="622" r="1.6"/><circle cx="1397" cy="622" r="1.6"/>
<circle cx="874" cy="648.3" r="1.6"/><circle cx="874" cy="656.3" r="1.6"/><circle cx="944" cy="656.3" r="1.6"/><circle cx="944" cy="635.4" r="1.6"/><circle cx="1014" cy="648.3" r="1.6"/><circle cx="1014" cy="656.3" r="1.6"/>
<circle cx="1169.6" cy="648.3" r="1.6"/><circle cx="1169.6" cy="656.3" r="1.6"/><circle cx="1239.6" cy="656.3" r="1.6"/><circle cx="1239.6" cy="635.4" r="1.6"/><circle cx="1309.6" cy="648.3" r="1.6"/><circle cx="1309.6" cy="656.3" r="1.6"/></g>
<g font-family="Liberation Sans, sans-serif" font-weight="bold" fill="#111" text-anchor="middle">
<text x="1117" y="476" font-size="11">앞판</text><text x="1170" y="476" font-size="11">앞판</text>
<text x="1360" y="483" font-size="10">뒤판</text><text x="1450" y="483" font-size="10">뒤판</text>
<text x="1137" y="522" font-size="5">C.F</text>
<text x="1388" y="523" font-size="5">C.B</text><text x="1414" y="523" font-size="5">C.B</text>
<text x="1080" y="603" font-size="6">표밑</text><text x="1198" y="603" font-size="6">표밑</text>
<text x="1330" y="610" font-size="6">표밑</text><text x="1476" y="610" font-size="6">표밑</text>
<text x="980" y="651" font-size="7.5">소매단</text><text x="1222" y="651" font-size="7.5">소매단</text>
</g>
</svg>
<div class="a" style="left:10px;top:8px;width:32px;height:156px;background:#4f4f51;border-radius:8px"></div>
<svg class="a" style="left:16px;top:17px" width="20" height="20" viewBox="0 0 20 20"><path d="M1 17 L14 5 L15 6 Z" fill="#e0e0e0" stroke="#e0e0e0" stroke-width="1.5"/><path d="M14 5 Q16 3 17 6 Q18 9 17 11 Q17 13 19 13" stroke="#3a9af0" stroke-width="1.5" fill="none"/></svg>
<svg class="a" style="left:16px;top:47px" width="20" height="20" viewBox="0 0 20 20"><path d="M6 2 L1 6 L4 10 L5.5 9 V18 H14.5 V9 L16 10 L19 6 L14 2 Q10 5 6 2Z" fill="#f2f2f2"/></svg>
<svg class="a" style="left:16px;top:77px" width="20" height="20" viewBox="0 0 20 20"><circle cx="10" cy="10" r="8.5" fill="#e8e8ec"/><text x="10" y="15.5" font-family="Liberation Serif,serif" font-style="italic" font-weight="bold" font-size="14" text-anchor="middle" fill="#2a6ae0">i</text></svg>
<svg class="a" style="left:16px;top:108px" width="20" height="20" viewBox="0 0 20 20"><path d="M3 6 L10 5 L9 16 Q5 14 2 16Z" fill="#c8c8c8"/><path d="M7 4 Q13 1 19 2 L16 14 Q12 13 8 16Z" fill="#2a8ef0"/></svg>
<svg class="a" style="left:16px;top:138px" width="20" height="20" viewBox="0 0 20 20"><path d="M6 2 L1 6 L4 10 L5.5 9 V18 H14.5 V9 L16 10 L19 6 L14 2 Q10 5 6 2Z" fill="#f2f2f2"/><rect x="1" y="12" width="6" height="6" fill="#2a7ae0"/><path d="M2.5 12 V10 Q4 8 5.5 10 V12" stroke="#2a7ae0" fill="none"/></svg>
</div>
<!-- 2D toolbar -->
<div class="a" style="left:1491px;top:63px;width:78px;height:942px;background:#252528"></div>

<!-- TOOLBARS -->
<div class="a" style="left:354px;top:63px;width:1px;height:942px;background:#2b2b2e"></div>
<div class="a" style="left:1531px;top:63px;width:1px;height:942px;background:#2b2b2e"></div>
<div class="a" style="left:321px;top:71px;width:28px;height:1px;background:#111113"></div>
<div class="a" style="left:321px;top:120px;width:28px;height:1px;background:#111113"></div>
<div class="a" style="left:321px;top:200px;width:28px;height:1px;background:#111113"></div>
<div class="a" style="left:321px;top:248px;width:28px;height:1px;background:#111113"></div>
<div class="a" style="left:321px;top:391px;width:28px;height:1px;background:#111113"></div>
<div class="a" style="left:321px;top:470px;width:28px;height:1px;background:#111113"></div>
<div class="a" style="left:321px;top:680px;width:28px;height:1px;background:#111113"></div>
<div class="a" style="left:321px;top:728px;width:28px;height:1px;background:#111113"></div>
<div class="a" style="left:321px;top:808px;width:28px;height:1px;background:#111113"></div>
<div class="a" style="left:359px;top:71px;width:28px;height:1px;background:#111113"></div>
<div class="a" style="left:359px;top:120px;width:28px;height:1px;background:#111113"></div>
<div class="a" style="left:359px;top:232px;width:28px;height:1px;background:#111113"></div>
<div class="a" style="left:359px;top:311px;width:28px;height:1px;background:#111113"></div>
<div class="a" style="left:359px;top:424px;width:28px;height:1px;background:#111113"></div>
<div class="a" style="left:359px;top:536px;width:28px;height:1px;background:#111113"></div>
<div class="a" style="left:359px;top:615px;width:28px;height:1px;background:#111113"></div>
<div class="a" style="left:359px;top:696px;width:28px;height:1px;background:#111113"></div>
<div class="a" style="left:359px;top:775px;width:28px;height:1px;background:#111113"></div>
<div class="a" style="left:319px;top:128px;width:32px;height:27px;background:#131315;border:1px solid #050505;border-radius:5px"></div>
<svg class="a" style="left:322px;top:80px" width="26" height="26" viewBox="-1 -1 22 22"><defs><linearGradient id="tg" x1="0" y1="0" x2="0" y2="1"><stop offset="0" stop-color="#6c6c6f"/><stop offset="1" stop-color="#c4c4c6"/></linearGradient></defs><path d="M6 1 H14 V9 H19 L10 18 L1 9 H6Z" fill="url(#tg)"/><path d="M21 15 V21 H15Z" fill="#c8c8ca"/></svg>
<svg class="a" style="left:322px;top:128px" width="26" height="26" viewBox="-1 -1 22 22"><defs><linearGradient id="tg" x1="0" y1="0" x2="0" y2="1"><stop offset="0" stop-color="#6c6c6f"/><stop offset="1" stop-color="#c4c4c6"/></linearGradient></defs><g stroke="#3a9af0" stroke-width="1.6" fill="#3a9af0"><path d="M12 4 V20 M4 12 H20"/><path d="M12 2 L10 5 H14Z M12 22 L10 19 H14Z M2 12 L5 10 V14Z M22 12 L19 10 V14Z"/></g><path d="M-1 -1 L5 2 L-1 5Z" fill="#9a9a9c"/></svg>
<svg class="a" style="left:322px;top:161px" width="26" height="26" viewBox="-1 -1 22 22"><defs><linearGradient id="tg" x1="0" y1="0" x2="0" y2="1"><stop offset="0" stop-color="#6c6c6f"/><stop offset="1" stop-color="#c4c4c6"/></linearGradient></defs><circle cx="9" cy="11" r="6" fill="none" stroke="#8e8e91" stroke-width="1.5" stroke-dasharray="2 2"/><path d="M18 3 L11 13 L9 17 Q14 16 13 13Z" fill="#d0d0d2"/><path d="M-1 -1 L5 2 L-1 5Z" fill="#9a9a9c"/><path d="M21 15 V21 H15Z" fill="#c8c8ca"/></svg>
<svg class="a" style="left:322px;top:207px" width="26" height="26" viewBox="-1 -1 22 22"><defs><linearGradient id="tg" x1="0" y1="0" x2="0" y2="1"><stop offset="0" stop-color="#6c6c6f"/><stop offset="1" stop-color="#c4c4c6"/></linearGradient></defs><path d="M6 2 L1 6 L4 10 L5.5 9 V18 H14.5 V9 L16 10 L19 6 L14 2 Q10 5 6 2Z" fill="url(#tg)"/><ellipse cx="10" cy="17" rx="7" ry="2" fill="#d0d0d2"/><path d="M-1 -1 L5 2 L-1 5Z" fill="#9a9a9c"/><path d="M21 15 V21 H15Z" fill="#c8c8ca"/></svg>
<svg class="a" style="left:322px;top:256px" width="26" height="26" viewBox="-1 -1 22 22"><defs><linearGradient id="tg" x1="0" y1="0" x2="0" y2="1"><stop offset="0" stop-color="#6c6c6f"/><stop offset="1" stop-color="#c4c4c6"/></linearGradient></defs><path d="M3 7 Q3 4 6 4 H15 Q18 4 18 7 V16 H12.5 V9 H8 V12 H6.5 V14 H5.5 V12 H3Z" fill="url(#tg)"/><rect x="2" y="17" width="17" height="1.8" fill="#8e8e91"/><path d="M-1 -1 L5 2 L-1 5Z" fill="#9a9a9c"/></svg>
<svg class="a" style="left:322px;top:288px" width="26" height="26" viewBox="-1 -1 22 22"><defs><linearGradient id="tg" x1="0" y1="0" x2="0" y2="1"><stop offset="0" stop-color="#6c6c6f"/><stop offset="1" stop-color="#c4c4c6"/></linearGradient></defs><path d="M5 2 H15 V13 H11 V7 H7 V10 H5Z" fill="#8e8e91"/><path d="M3 16 H17" stroke="#d0d0d2" stroke-width="1.2"/><circle cx="3" cy="16" r="1.5" fill="#d0d0d2"/><circle cx="17" cy="16" r="1.5" fill="#d0d0d2"/><path d="M21 15 V21 H15Z" fill="#c8c8ca"/></svg>
<svg class="a" style="left:322px;top:322px" width="26" height="26" viewBox="-1 -1 22 22"><defs><linearGradient id="tg" x1="0" y1="0" x2="0" y2="1"><stop offset="0" stop-color="#6c6c6f"/><stop offset="1" stop-color="#c4c4c6"/></linearGradient></defs><path d="M5 2 H15 V13 H11 V7 H7 V10 H5Z" fill="#8e8e91"/><path d="M2 17 Q6 13 10 16 Q14 19 18 15" stroke="#d0d0d2" stroke-width="1.2" fill="none"/><path d="M21 15 V21 H15Z" fill="#c8c8ca"/></svg>
<svg class="a" style="left:322px;top:352px" width="26" height="26" viewBox="-1 -1 22 22"><defs><linearGradient id="tg" x1="0" y1="0" x2="0" y2="1"><stop offset="0" stop-color="#6c6c6f"/><stop offset="1" stop-color="#c4c4c6"/></linearGradient></defs><circle cx="6" cy="4" r="2.5" fill="#8e8e91"/><path d="M2 8 H10 V18 H2Z" fill="#d0d0d2"/><path d="M11 9 H18 V16 H14 V12 H11Z" fill="#8e8e91"/></svg>
<svg class="a" style="left:322px;top:401px" width="26" height="26" viewBox="-1 -1 22 22"><defs><linearGradient id="tg" x1="0" y1="0" x2="0" y2="1"><stop offset="0" stop-color="#6c6c6f"/><stop offset="1" stop-color="#c4c4c6"/></linearGradient></defs><path d="M4 18 L14 8" stroke="#d0d0d2" stroke-width="1.2"/><circle cx="15" cy="7" r="2.5" fill="#d0d0d2"/><path d="M-1 -1 L5 2 L-1 5Z" fill="#9a9a9c"/></svg>
<svg class="a" style="left:322px;top:432px" width="26" height="26" viewBox="-1 -1 22 22"><defs><linearGradient id="tg" x1="0" y1="0" x2="0" y2="1"><stop offset="0" stop-color="#6c6c6f"/><stop offset="1" stop-color="#c4c4c6"/></linearGradient></defs><path d="M3 6 Q10 2 17 6 V16 Q10 12 3 16Z" fill="#8e8e91"/><circle cx="15" cy="14" r="2.5" fill="#d0d0d2"/><path d="M21 15 V21 H15Z" fill="#c8c8ca"/></svg>
<svg class="a" style="left:322px;top:481px" width="26" height="26" viewBox="-1 -1 22 22"><defs><linearGradient id="tg" x1="0" y1="0" x2="0" y2="1"><stop offset="0" stop-color="#6c6c6f"/><stop offset="1" stop-color="#c4c4c6"/></linearGradient></defs><path d="M4 7 L10 3 L16 6 V14 L10 17 L4 14Z" fill="none" stroke="#8e8e91" stroke-width="1.4"/><path d="M8 9 L14 13 L10 14Z" fill="#d0d0d2"/></svg>
<svg class="a" style="left:322px;top:512px" width="26" height="26" viewBox="-1 -1 22 22"><defs><linearGradient id="tg" x1="0" y1="0" x2="0" y2="1"><stop offset="0" stop-color="#6c6c6f"/><stop offset="1" stop-color="#c4c4c6"/></linearGradient></defs><path d="M6 3 L1 7 V13 H4 V18 H16 V13 H19 V7 L14 3 L10 6Z" fill="url(#tg)"/><path d="M10 6 V18 M6 3 L10 9 L14 3" stroke="#444" stroke-width="0.8" fill="none"/></svg>
<svg class="a" style="left:322px;top:544px" width="26" height="26" viewBox="-1 -1 22 22"><defs><linearGradient id="tg" x1="0" y1="0" x2="0" y2="1"><stop offset="0" stop-color="#6c6c6f"/><stop offset="1" stop-color="#c4c4c6"/></linearGradient></defs><path d="M6 3 L1 7 V13 H4 V18 H16 V13 H19 V7 L14 3 L10 6Z" fill="url(#tg)"/><path d="M10 6 V18 M6 3 L10 9 L14 3" stroke="#444" stroke-width="0.8" fill="none"/></svg>
<svg class="a" style="left:322px;top:576px" width="26" height="26" viewBox="-1 -1 22 22"><defs><linearGradient id="tg" x1="0" y1="0" x2="0" y2="1"><stop offset="0" stop-color="#6c6c6f"/><stop offset="1" stop-color="#c4c4c6"/></linearGradient></defs><circle cx="10" cy="3.5" r="2.6" fill="#8e8e91"/><path d="M7 7 H13 V12 H7Z" fill="#8e8e91"/><path d="M1 8 L8 10 V19 L1 17Z" fill="url(#tg)"/><path d="M19 8 L12 10 V19 L19 17Z" fill="url(#tg)"/></svg>
<svg class="a" style="left:322px;top:608px" width="26" height="26" viewBox="-1 -1 22 22"><defs><linearGradient id="tg" x1="0" y1="0" x2="0" y2="1"><stop offset="0" stop-color="#6c6c6f"/><stop offset="1" stop-color="#c4c4c6"/></linearGradient></defs><circle cx="10" cy="3.5" r="2.6" fill="#8e8e91"/><path d="M7 7 H13 V12 H7Z" fill="#8e8e91"/><path d="M1 8 L8 10 V19 L1 17Z" fill="url(#tg)"/><path d="M19 8 L12 10 V19 L19 17Z" fill="url(#tg)"/></svg>
<svg class="a" style="left:322px;top:641px" width="26" height="26" viewBox="-1 -1 22 22"><defs><linearGradient id="tg" x1="0" y1="0" x2="0" y2="1"><stop offset="0" stop-color="#6c6c6f"/><stop offset="1" stop-color="#c4c4c6"/></linearGradient></defs><circle cx="10" cy="3.5" r="2.6" fill="#8e8e91"/><path d="M7 7 H13 V12 H7Z" fill="#8e8e91"/><path d="M1 8 L8 10 V19 L1 17Z" fill="url(#tg)"/><path d="M19 8 L12 10 V19 L19 17Z" fill="url(#tg)"/></svg>
<svg class="a" style="left:322px;top:688px" width="26" height="26" viewBox="-1 -1 22 22"><defs><linearGradient id="tg" x1="0" y1="0" x2="0" y2="1"><stop offset="0" stop-color="#6c6c6f"/><stop offset="1" stop-color="#c4c4c6"/></linearGradient></defs><path d="M3 6 L8 3 L12 6 V17 H3Z" fill="none" stroke="#d0d0d2" stroke-width="1.2"/><path d="M15 18 V4 M13 6 L15 3 L17 6" stroke="#d0d0d2" stroke-width="1.3" fill="none"/><path d="M21 15 V21 H15Z" fill="#c8c8ca"/></svg>
<svg class="a" style="left:322px;top:735px" width="26" height="26" viewBox="-1 -1 22 22"><defs><linearGradient id="tg" x1="0" y1="0" x2="0" y2="1"><stop offset="0" stop-color="#6c6c6f"/><stop offset="1" stop-color="#c4c4c6"/></linearGradient></defs><path d="M3 5 Q12 16 18 12" stroke="#8e8e91" stroke-width="3" fill="none"/><path d="M-1 -1 L5 2 L-1 5Z" fill="#9a9a9c"/><path d="M21 15 V21 H15Z" fill="#c8c8ca"/></svg>
<svg class="a" style="left:322px;top:769px" width="26" height="26" viewBox="-1 -1 22 22"><defs><linearGradient id="tg" x1="0" y1="0" x2="0" y2="1"><stop offset="0" stop-color="#6c6c6f"/><stop offset="1" stop-color="#c4c4c6"/></linearGradient></defs><path d="M1 14 L13 2 L18 7 L6 19Z" fill="url(#tg)"/><path d="M4 11 L6 13 M6 9 L7.5 10.5 M8 7 L10 9 M10 5 L11.5 6.5" stroke="#333" stroke-width="0.8"/><path d="M21 15 V21 H15Z" fill="#c8c8ca"/></svg>
<svg class="a" style="left:322px;top:812px" width="26" height="26" viewBox="-1 -1 22 22"><defs><linearGradient id="tg" x1="0" y1="0" x2="0" y2="1"><stop offset="0" stop-color="#6c6c6f"/><stop offset="1" stop-color="#c4c4c6"/></linearGradient></defs><path d="M6 2 L1 6 L4 10 L5.5 9 V18 H14.5 V9 L16 10 L19 6 L14 2 Q10 5 6 2Z" fill="url(#tg)"/><path d="M7 9 H13 V16 H7Z" fill="none" stroke="#eee" stroke-width="0.8"/><path d="M8.5 9 V16 M10 9 V16 M11.5 9 V16" stroke="#eee" stroke-width="0.6"/><path d="M-1 -1 L5 2 L-1 5Z" fill="#9a9a9c"/></svg>
<svg class="a" style="left:322px;top:848px" width="26" height="26" viewBox="-1 -1 22 22"><defs><linearGradient id="tg" x1="0" y1="0" x2="0" y2="1"><stop offset="0" stop-color="#6c6c6f"/><stop offset="1" stop-color="#c4c4c6"/></linearGradient></defs><path d="M6 2 L1 6 L4 10 L5.5 9 V18 H14.5 V9 L16 10 L19 6 L14 2 Q10 5 6 2Z" fill="url(#tg)"/><path d="M7 9 H13 V16 H7Z" fill="none" stroke="#eee" stroke-width="0.8"/><path d="M8.5 9 V16 M10 9 V16 M11.5 9 V16" stroke="#eee" stroke-width="0.6"/><path d="M21 15 V21 H15Z" fill="#c8c8ca"/></svg>
<svg class="a" style="left:360px;top:80px" width="26" height="26" viewBox="-1 -1 22 22"><defs><linearGradient id="tg" x1="0" y1="0" x2="0" y2="1"><stop offset="0" stop-color="#6c6c6f"/><stop offset="1" stop-color="#c4c4c6"/></linearGradient></defs><circle cx="12" cy="4" r="2" fill="#8e8e91"/><path d="M11 7 L7 12 L4 18 M11 7 L12 12 L16 18 M9 9 L16 9" stroke="#8e8e91" stroke-width="2.2" fill="none"/><path d="M-1 -1 L5 2 L-1 5Z" fill="#9a9a9c"/></svg>
<svg class="a" style="left:360px;top:127px" width="26" height="26" viewBox="-1 -1 22 22"><defs><linearGradient id="tg" x1="0" y1="0" x2="0" y2="1"><stop offset="0" stop-color="#6c6c6f"/><stop offset="1" stop-color="#c4c4c6"/></linearGradient></defs><path d="M6 4 L2 8 L5 11 L6 10 V19 H14 V10 L15 11 L18 8 L14 4 Q10 7 6 4Z" fill="#8e8e91"/><path d="M3 9 Q8 8 10 12 Q12 16 16 16" stroke="#d0d0d2" stroke-width="1.4" fill="none"/><path d="M19 2 L12 10 L13 11 L20 3Z" fill="#d0d0d2"/><path d="M-1 -1 L5 2 L-1 5Z" fill="#9a9a9c"/></svg>
<svg class="a" style="left:360px;top:160px" width="26" height="26" viewBox="-1 -1 22 22"><defs><linearGradient id="tg" x1="0" y1="0" x2="0" y2="1"><stop offset="0" stop-color="#6c6c6f"/><stop offset="1" stop-color="#c4c4c6"/></linearGradient></defs><path d="M6 4 L2 8 L5 11 L6 10 V19 H14 V10 L15 11 L18 8 L14 4 Q10 7 6 4Z" fill="#8e8e91"/><path d="M3 9 Q8 8 10 12 Q12 16 16 16" stroke="#d0d0d2" stroke-width="1.4" fill="none"/><path d="M19 2 L12 10 L13 11 L20 3Z" fill="#d0d0d2"/></svg>
<svg class="a" style="left:360px;top:192px" width="26" height="26" viewBox="-1 -1 22 22"><defs><linearGradient id="tg" x1="0" y1="0" x2="0" y2="1"><stop offset="0" stop-color="#6c6c6f"/><stop offset="1" stop-color="#c4c4c6"/></linearGradient></defs><path d="M6 4 L2 8 L5 11 L6 10 V19 H14 V10 L15 11 L18 8 L14 4 Q10 7 6 4Z" fill="#8e8e91"/><path d="M3 9 Q8 8 10 12 Q12 16 16 16" stroke="#d0d0d2" stroke-width="1.4" fill="none"/><path d="M19 2 L12 10 L13 11 L20 3Z" fill="#d0d0d2"/></svg>
<svg class="a" style="left:360px;top:238px" width="26" height="26" viewBox="-1 -1 22 22"><defs><linearGradient id="tg" x1="0" y1="0" x2="0" y2="1"><stop offset="0" stop-color="#6c6c6f"/><stop offset="1" stop-color="#c4c4c6"/></linearGradient></defs><path d="M6 4 L2 8 L5 11 L6 10 V19 H14 V10 L15 11 L18 8 L14 4 Q10 7 6 4Z" fill="#8e8e91"/><path d="M3 9 Q8 8 10 12 Q12 16 16 16" stroke="#d0d0d2" stroke-width="1.4" fill="none"/><path d="M19 2 L12 10 L13 11 L20 3Z" fill="#d0d0d2"/><path d="M-1 -1 L5 2 L-1 5Z" fill="#9a9a9c"/></svg>
<svg class="a" style="left:360px;top:274px" width="26" height="26" viewBox="-1 -1 22 22"><defs><linearGradient id="tg" x1="0" y1="0" x2="0" y2="1"><stop offset="0" stop-color="#6c6c6f"/><stop offset="1" stop-color="#c4c4c6"/></linearGradient></defs><path d="M6 4 L2 8 L5 11 L6 10 V19 H14 V10 L15 11 L18 8 L14 4 Q10 7 6 4Z" fill="#8e8e91"/><path d="M3 9 Q8 8 10 12 Q12 16 16 16" stroke="#d0d0d2" stroke-width="1.4" fill="none"/><path d="M19 2 L12 10 L13 11 L20 3Z" fill="#d0d0d2"/><path d="M21 15 V21 H15Z" fill="#c8c8ca"/></svg>
<svg class="a" style="left:360px;top:321px" width="26" height="26" viewBox="-1 -1 22 22"><defs><linearGradient id="tg" x1="0" y1="0" x2="0" y2="1"><stop offset="0" stop-color="#6c6c6f"/><stop offset="1" stop-color="#c4c4c6"/></linearGradient></defs><path d="M8 3 Q14 1 18 4 V14 Q12 12 8 15Z" fill="#d0d0d2"/><path d="M4 12h2v2h-2zM8 12h2v2h-2zM6 14h2v2h-2zM10 14h2v2h-2z" fill="#222"/><path d="M-1 -1 L5 2 L-1 5Z" fill="#9a9a9c"/></svg>
<svg class="a" style="left:360px;top:352px" width="26" height="26" viewBox="-1 -1 22 22"><defs><linearGradient id="tg" x1="0" y1="0" x2="0" y2="1"><stop offset="0" stop-color="#6c6c6f"/><stop offset="1" stop-color="#c4c4c6"/></linearGradient></defs><path d="M6 3 L2 7 L5 10 L6 9 V18 H14 V9 L15 10 L18 7 L14 3 Q10 6 6 3Z" fill="#8e8e91"/><rect x="7" y="8" width="6" height="8" fill="#eee"/><path d="M7 8h2v2h-2zM11 8h2v2h-2zM9 10h2v2h-2zM7 12h2v2h-2zM11 12h2v2h-2zM9 14h2v2h-2z" fill="#222"/><path d="M-1 -1 L5 2 L-1 5Z" fill="#9a9a9c"/></svg>
<svg class="a" style="left:360px;top:385px" width="26" height="26" viewBox="-1 -1 22 22"><defs><linearGradient id="tg" x1="0" y1="0" x2="0" y2="1"><stop offset="0" stop-color="#6c6c6f"/><stop offset="1" stop-color="#c4c4c6"/></linearGradient></defs><path d="M6 3 L2 7 L5 10 L6 9 V18 H14 V9 L15 10 L18 7 L14 3 Q10 6 6 3Z" fill="#8e8e91"/><rect x="7" y="8" width="6" height="8" fill="#eee"/><path d="M7 8h2v2h-2zM11 8h2v2h-2zM9 10h2v2h-2zM7 12h2v2h-2zM11 12h2v2h-2zM9 14h2v2h-2z" fill="#222"/></svg>
<svg class="a" style="left:360px;top:433px" width="26" height="26" viewBox="-1 -1 22 22"><defs><linearGradient id="tg" x1="0" y1="0" x2="0" y2="1"><stop offset="0" stop-color="#6c6c6f"/><stop offset="1" stop-color="#c4c4c6"/></linearGradient></defs><circle cx="10" cy="10" r="7" fill="#8e8e91"/><g fill="#333"><circle cx="8" cy="8" r="1"/><circle cx="12" cy="8" r="1"/><circle cx="8" cy="12" r="1"/><circle cx="12" cy="12" r="1"/></g><path d="M-1 -1 L5 2 L-1 5Z" fill="#9a9a9c"/></svg>
<svg class="a" style="left:360px;top:465px" width="26" height="26" viewBox="-1 -1 22 22"><defs><linearGradient id="tg" x1="0" y1="0" x2="0" y2="1"><stop offset="0" stop-color="#6c6c6f"/><stop offset="1" stop-color="#c4c4c6"/></linearGradient></defs><circle cx="10" cy="10" r="7" fill="#8e8e91"/><g fill="#333"><circle cx="8" cy="8" r="1"/><circle cx="12" cy="8" r="1"/><circle cx="8" cy="12" r="1"/><circle cx="12" cy="12" r="1"/></g><path d="M21 15 V21 H15Z" fill="#c8c8ca"/></svg>
<svg class="a" style="left:360px;top:497px" width="26" height="26" viewBox="-1 -1 22 22"><defs><linearGradient id="tg" x1="0" y1="0" x2="0" y2="1"><stop offset="0" stop-color="#6c6c6f"/><stop offset="1" stop-color="#c4c4c6"/></linearGradient></defs><circle cx="10" cy="10" r="7" fill="#8e8e91"/><g fill="#333"><circle cx="8" cy="8" r="1"/><circle cx="12" cy="8" r="1"/><circle cx="8" cy="12" r="1"/><circle cx="12" cy="12" r="1"/></g></svg>
<svg class="a" style="left:360px;top:539px" width="26" height="26" viewBox="-1 -1 22 22"><defs><linearGradient id="tg" x1="0" y1="0" x2="0" y2="1"><stop offset="0" stop-color="#6c6c6f"/><stop offset="1" stop-color="#c4c4c6"/></linearGradient></defs><rect x="3" y="4" width="14" height="15" fill="url(#tg)"/><rect x="7.5" y="1.5" width="5" height="10" rx="2.5" fill="#d0d0d2"/><path d="M10 11 V19" stroke="#ddd" stroke-dasharray="1 1"/><path d="M-1 -1 L5 2 L-1 5Z" fill="#9a9a9c"/></svg>
<svg class="a" style="left:360px;top:576px" width="26" height="26" viewBox="-1 -1 22 22"><defs><linearGradient id="tg" x1="0" y1="0" x2="0" y2="1"><stop offset="0" stop-color="#6c6c6f"/><stop offset="1" stop-color="#c4c4c6"/></linearGradient></defs><rect x="3" y="4" width="14" height="15" fill="url(#tg)"/><rect x="7.5" y="1.5" width="5" height="10" rx="2.5" fill="#d0d0d2"/><path d="M10 11 V19" stroke="#ddd" stroke-dasharray="1 1"/></svg>
<svg class="a" style="left:360px;top:623px" width="26" height="26" viewBox="-1 -1 22 22"><defs><linearGradient id="tg" x1="0" y1="0" x2="0" y2="1"><stop offset="0" stop-color="#6c6c6f"/><stop offset="1" stop-color="#c4c4c6"/></linearGradient></defs><rect x="2" y="5" width="13" height="12" fill="url(#tg)"/><rect x="15" y="3" width="3.5" height="15" rx="1.7" fill="#d0d0d2"/><path d="M-1 -1 L5 2 L-1 5Z" fill="#9a9a9c"/></svg>
<svg class="a" style="left:360px;top:655px" width="26" height="26" viewBox="-1 -1 22 22"><defs><linearGradient id="tg" x1="0" y1="0" x2="0" y2="1"><stop offset="0" stop-color="#6c6c6f"/><stop offset="1" stop-color="#c4c4c6"/></linearGradient></defs><rect x="2" y="5" width="13" height="12" fill="url(#tg)"/><rect x="15" y="3" width="3.5" height="15" rx="1.7" fill="#d0d0d2"/></svg>
<svg class="a" style="left:360px;top:704px" width="26" height="26" viewBox="-1 -1 22 22"><defs><linearGradient id="tg" x1="0" y1="0" x2="0" y2="1"><stop offset="0" stop-color="#6c6c6f"/><stop offset="1" stop-color="#c4c4c6"/></linearGradient></defs><rect x="2" y="5" width="13" height="12" fill="url(#tg)"/><rect x="15" y="3" width="3.5" height="15" rx="1.7" fill="#d0d0d2"/><path d="M-1 -1 L5 2 L-1 5Z" fill="#9a9a9c"/></svg>
<svg class="a" style="left:360px;top:736px" width="26" height="26" viewBox="-1 -1 22 22"><defs><linearGradient id="tg" x1="0" y1="0" x2="0" y2="1"><stop offset="0" stop-color="#6c6c6f"/><stop offset="1" stop-color="#c4c4c6"/></linearGradient></defs><rect x="2" y="5" width="13" height="12" fill="url(#tg)"/><rect x="15" y="3" width="3.5" height="15" rx="1.7" fill="#d0d0d2"/></svg>
<svg class="a" style="left:360px;top:785px" width="26" height="26" viewBox="-1 -1 22 22"><defs><linearGradient id="tg" x1="0" y1="0" x2="0" y2="1"><stop offset="0" stop-color="#6c6c6f"/><stop offset="1" stop-color="#c4c4c6"/></linearGradient></defs><path d="M6.5 2 V13 Q10 19 13.5 13 V2 H11.5 V11 Q10 13 8.5 11 V2Z" fill="url(#tg)"/><path d="M0 10 H5 M20 10 H15" stroke="#d0d0d2" stroke-width="1.3"/><path d="M5 10 L3 8.5 V11.5Z M15 10 L17 8.5 V11.5Z" fill="#d0d0d2"/></svg>
<div class="a" style="left:1497px;top:72px;width:29px;height:1px;background:#111113"></div>
<div class="a" style="left:1497px;top:408px;width:29px;height:1px;background:#111113"></div>
<div class="a" style="left:1497px;top:455px;width:29px;height:1px;background:#111113"></div>
<div class="a" style="left:1497px;top:535px;width:29px;height:1px;background:#111113"></div>
<div class="a" style="left:1497px;top:615px;width:29px;height:1px;background:#111113"></div>
<div class="a" style="left:1497px;top:664px;width:29px;height:1px;background:#111113"></div>
<div class="a" style="left:1536px;top:72px;width:30px;height:1px;background:#111113"></div>
<div class="a" style="left:1536px;top:215px;width:30px;height:1px;background:#111113"></div>
<div class="a" style="left:1536px;top:264px;width:30px;height:1px;background:#111113"></div>
<div class="a" style="left:1536px;top:311px;width:30px;height:1px;background:#111113"></div>
<div class="a" style="left:1536px;top:422px;width:30px;height:1px;background:#111113"></div>
<div class="a" style="left:1536px;top:503px;width:30px;height:1px;background:#111113"></div>
<div class="a" style="left:1536px;top:584px;width:30px;height:1px;background:#111113"></div>
<div class="a" style="left:1536px;top:631px;width:30px;height:1px;background:#111113"></div>
<div class="a" style="left:1536px;top:678px;width:30px;height:1px;background:#111113"></div>
<div class="a" style="left:1496px;top:80px;width:31px;height:27px;background:#131315;border:1px solid #050505;border-radius:5px"></div>
<svg class="a" style="left:1499px;top:80px" width="26" height="26" viewBox="-1 -1 22 22"><defs><linearGradient id="tg" x1="0" y1="0" x2="0" y2="1"><stop offset="0" stop-color="#6c6c6f"/><stop offset="1" stop-color="#c4c4c6"/></linearGradient></defs><path d="M4 18 L17 5 V18Z" fill="#2f5da8" stroke="#4aa0f0" stroke-width="1"/><path d="M-1 -1 L5 2 L-1 5Z" fill="#9a9a9c"/></svg>
<svg class="a" style="left:1499px;top:113px" width="26" height="26" viewBox="-1 -1 22 22"><defs><linearGradient id="tg" x1="0" y1="0" x2="0" y2="1"><stop offset="0" stop-color="#6c6c6f"/><stop offset="1" stop-color="#c4c4c6"/></linearGradient></defs><path d="M4 17 L15 5 L17 17Z" fill="none" stroke="#d0d0d2" stroke-width="1.3"/><g fill="#d0d0d2"><circle cx="4" cy="17" r="1.5"/><circle cx="15" cy="5" r="1.5"/><circle cx="17" cy="17" r="1.5"/></g><path d="M-1 -1 L5 2 L-1 5Z" fill="#9a9a9c"/><path d="M21 15 V21 H15Z" fill="#c8c8ca"/></svg>
<svg class="a" style="left:1499px;top:145px" width="26" height="26" viewBox="-1 -1 22 22"><defs><linearGradient id="tg" x1="0" y1="0" x2="0" y2="1"><stop offset="0" stop-color="#6c6c6f"/><stop offset="1" stop-color="#c4c4c6"/></linearGradient></defs><path d="M3 3 H10 L17 10 L10 17 H3Z" fill="#8e8e91"/><g fill="#d0d0d2"><circle cx="17" cy="10" r="1.5"/><circle cx="10" cy="17" r="1.5"/></g><path d="M21 15 V21 H15Z" fill="#c8c8ca"/></svg>
<svg class="a" style="left:1499px;top:178px" width="26" height="26" viewBox="-1 -1 22 22"><defs><linearGradient id="tg" x1="0" y1="0" x2="0" y2="1"><stop offset="0" stop-color="#6c6c6f"/><stop offset="1" stop-color="#c4c4c6"/></linearGradient></defs><path d="M3 4 H10 Q17 6 17 12 V17 H3Z" fill="#8e8e91"/><path d="M21 15 V21 H15Z" fill="#c8c8ca"/></svg>
<svg class="a" style="left:1499px;top:209px" width="26" height="26" viewBox="-1 -1 22 22"><defs><linearGradient id="tg" x1="0" y1="0" x2="0" y2="1"><stop offset="0" stop-color="#6c6c6f"/><stop offset="1" stop-color="#c4c4c6"/></linearGradient></defs><rect x="2" y="3" width="16" height="14" fill="#8e8e91"/><path d="M5 6 H9 L10 7 H15 V14 H5Z" fill="none" stroke="#d0d0d2" stroke-width="1"/><path d="M21 15 V21 H15Z" fill="#c8c8ca"/></svg>
<svg class="a" style="left:1499px;top:239px" width="26" height="26" viewBox="-1 -1 22 22"><defs><linearGradient id="tg" x1="0" y1="0" x2="0" y2="1"><stop offset="0" stop-color="#6c6c6f"/><stop offset="1" stop-color="#c4c4c6"/></linearGradient></defs><path d="M4 2 L8 4 H12 L16 2 L18 8 V18 H2 V8Z" fill="#8e8e91"/><path d="M8 6 Q12 8 8 10 Q12 12 8 14 Q12 16 8 18 M12 6 Q8 8 12 10 Q8 12 12 14 Q8 16 12 18" stroke="#d0d0d2" stroke-width="1" fill="none"/></svg>
<svg class="a" style="left:1499px;top:272px" width="26" height="26" viewBox="-1 -1 22 22"><defs><linearGradient id="tg" x1="0" y1="0" x2="0" y2="1"><stop offset="0" stop-color="#6c6c6f"/><stop offset="1" stop-color="#c4c4c6"/></linearGradient></defs><rect x="2" y="3" width="16" height="14" fill="#8e8e91"/><rect x="5" y="6" width="10" height="8" fill="none" stroke="#d0d0d2" stroke-dasharray="1.5 1.5"/><path d="M21 15 V21 H15Z" fill="#c8c8ca"/></svg>
<svg class="a" style="left:1499px;top:304px" width="26" height="26" viewBox="-1 -1 22 22"><defs><linearGradient id="tg" x1="0" y1="0" x2="0" y2="1"><stop offset="0" stop-color="#6c6c6f"/><stop offset="1" stop-color="#c4c4c6"/></linearGradient></defs><rect x="2" y="7" width="10" height="10" fill="#8e8e91"/><path d="M10 3 H18 V10 L14 14 L10 10Z" fill="#d0d0d2"/></svg>
<svg class="a" style="left:1499px;top:337px" width="26" height="26" viewBox="-1 -1 22 22"><defs><linearGradient id="tg" x1="0" y1="0" x2="0" y2="1"><stop offset="0" stop-color="#6c6c6f"/><stop offset="1" stop-color="#c4c4c6"/></linearGradient></defs><path d="M3 4 L17 18 M17 4 L3 18" stroke="#d0d0d2" stroke-width="1.3"/><circle cx="10" cy="11" r="1.6" fill="#d0d0d2"/><path d="M-1 -1 L5 2 L-1 5Z" fill="#9a9a9c"/></svg>
<svg class="a" style="left:1499px;top:368px" width="26" height="26" viewBox="-1 -1 22 22"><defs><linearGradient id="tg" x1="0" y1="0" x2="0" y2="1"><stop offset="0" stop-color="#6c6c6f"/><stop offset="1" stop-color="#c4c4c6"/></linearGradient></defs><path d="M7 3 Q10 6 13 3 L16 6 V18 H5 V9 Z" fill="none" stroke="#d0d0d2" stroke-width="1.5"/><path d="M-1 -1 L5 2 L-1 5Z" fill="#9a9a9c"/></svg>
<svg class="a" style="left:1499px;top:416px" width="26" height="26" viewBox="-1 -1 22 22"><defs><linearGradient id="tg" x1="0" y1="0" x2="0" y2="1"><stop offset="0" stop-color="#6c6c6f"/><stop offset="1" stop-color="#c4c4c6"/></linearGradient></defs><path d="M3 4 H12 L16 6 V16 L12 18 H3Z" fill="#8e8e91"/><rect x="11" y="5" width="4" height="12" fill="#d0d0d2"/></svg>
<svg class="a" style="left:1499px;top:465px" width="26" height="26" viewBox="-1 -1 22 22"><defs><linearGradient id="tg" x1="0" y1="0" x2="0" y2="1"><stop offset="0" stop-color="#6c6c6f"/><stop offset="1" stop-color="#c4c4c6"/></linearGradient></defs><path d="M5 3 V17" stroke="#d0d0d2" stroke-width="1.2"/><rect x="9" y="3" width="8" height="14" fill="none" stroke="#8e8e91" stroke-width="1.2"/><path d="M9 6 H13 M9 9 H13 M9 12 H13 M9 15 H13" stroke="#8e8e91"/><path d="M-1 -1 L5 2 L-1 5Z" fill="#9a9a9c"/></svg>
<svg class="a" style="left:1499px;top:495px" width="26" height="26" viewBox="-1 -1 22 22"><defs><linearGradient id="tg" x1="0" y1="0" x2="0" y2="1"><stop offset="0" stop-color="#6c6c6f"/><stop offset="1" stop-color="#c4c4c6"/></linearGradient></defs><path d="M2 5 H18" stroke="#d0d0d2" stroke-width="1.2"/><rect x="2" y="9" width="16" height="7" fill="#8e8e91"/><path d="M5 9 V13 M8 9 V13 M11 9 V13 M14 9 V13" stroke="#333"/></svg>
<svg class="a" style="left:1499px;top:544px" width="26" height="26" viewBox="-1 -1 22 22"><defs><linearGradient id="tg" x1="0" y1="0" x2="0" y2="1"><stop offset="0" stop-color="#6c6c6f"/><stop offset="1" stop-color="#c4c4c6"/></linearGradient></defs><text x="10" y="18" font-family="Liberation Serif,serif" font-size="20" text-anchor="middle" fill="#d0d0d2">A</text><path d="M-1 -1 L5 2 L-1 5Z" fill="#9a9a9c"/></svg>
<svg class="a" style="left:1499px;top:576px" width="26" height="26" viewBox="-1 -1 22 22"><defs><linearGradient id="tg" x1="0" y1="0" x2="0" y2="1"><stop offset="0" stop-color="#6c6c6f"/><stop offset="1" stop-color="#c4c4c6"/></linearGradient></defs><text x="10" y="18" font-family="Liberation Serif,serif" font-size="20" text-anchor="middle" fill="#d0d0d2">A</text><path d="M21 15 V21 H15Z" fill="#c8c8ca"/></svg>
<svg class="a" style="left:1499px;top:625px" width="26" height="26" viewBox="-1 -1 22 22"><defs><linearGradient id="tg" x1="0" y1="0" x2="0" y2="1"><stop offset="0" stop-color="#6c6c6f"/><stop offset="1" stop-color="#c4c4c6"/></linearGradient></defs><rect x="2" y="3" width="16" height="14" fill="none" stroke="#8e8e91" stroke-width="1.3"/><path d="M7 4 V17 M13 4 V17" stroke="#8e8e91" stroke-dasharray="1.5 1.5"/><path d="M21 15 V21 H15Z" fill="#c8c8ca"/></svg>
<svg class="a" style="left:1499px;top:672px" width="26" height="26" viewBox="-1 -1 22 22"><defs><linearGradient id="tg" x1="0" y1="0" x2="0" y2="1"><stop offset="0" stop-color="#6c6c6f"/><stop offset="1" stop-color="#c4c4c6"/></linearGradient></defs><path d="M6 3 L2 7 L6 9 V17 H11 Z" fill="#8e8e91"/><path d="M10 18 L18 8" stroke="#d0d0d2" stroke-width="1.2"/><path d="M-1 -1 L5 2 L-1 5Z" fill="#9a9a9c"/><path d="M21 15 V21 H15Z" fill="#c8c8ca"/></svg>
<svg class="a" style="left:1499px;top:704px" width="26" height="26" viewBox="-1 -1 22 22"><defs><linearGradient id="tg" x1="0" y1="0" x2="0" y2="1"><stop offset="0" stop-color="#6c6c6f"/><stop offset="1" stop-color="#c4c4c6"/></linearGradient></defs><circle cx="6" cy="4" r="2" fill="#8e8e91"/><path d="M2 7 H10 V18 H2Z" fill="#8e8e91"/><path d="M10 8 H17 V18 H10Z" fill="#d0d0d2"/></svg>
<svg class="a" style="left:1537px;top:80px" width="26" height="26" viewBox="-1 -1 22 22"><defs><linearGradient id="tg" x1="0" y1="0" x2="0" y2="1"><stop offset="0" stop-color="#6c6c6f"/><stop offset="1" stop-color="#c4c4c6"/></linearGradient></defs><path d="M3 7 Q3 4 6 4 H15 Q18 4 18 7 V16 H12.5 V9 H8 V12 H6.5 V14 H5.5 V12 H3Z" fill="url(#tg)"/><rect x="2" y="17" width="17" height="1.8" fill="#8e8e91"/><path d="M-1 -1 L5 2 L-1 5Z" fill="#9a9a9c"/></svg>
<svg class="a" style="left:1537px;top:113px" width="26" height="26" viewBox="-1 -1 22 22"><defs><linearGradient id="tg" x1="0" y1="0" x2="0" y2="1"><stop offset="0" stop-color="#6c6c6f"/><stop offset="1" stop-color="#c4c4c6"/></linearGradient></defs><path d="M5 2 H15 V13 H11 V7 H7 V10 H5Z" fill="#8e8e91"/><path d="M3 16 H17" stroke="#d0d0d2" stroke-width="1.2"/><circle cx="3" cy="16" r="1.5" fill="#d0d0d2"/><circle cx="17" cy="16" r="1.5" fill="#d0d0d2"/><path d="M21 15 V21 H15Z" fill="#c8c8ca"/></svg>
<svg class="a" style="left:1537px;top:145px" width="26" height="26" viewBox="-1 -1 22 22"><defs><linearGradient id="tg" x1="0" y1="0" x2="0" y2="1"><stop offset="0" stop-color="#6c6c6f"/><stop offset="1" stop-color="#c4c4c6"/></linearGradient></defs><path d="M5 2 H15 V13 H11 V7 H7 V10 H5Z" fill="#8e8e91"/><path d="M2 17 Q6 13 10 16 Q14 19 18 15" stroke="#d0d0d2" stroke-width="1.2" fill="none"/><path d="M21 15 V21 H15Z" fill="#c8c8ca"/></svg>
<svg class="a" style="left:1537px;top:176px" width="26" height="26" viewBox="-1 -1 22 22"><defs><linearGradient id="tg" x1="0" y1="0" x2="0" y2="1"><stop offset="0" stop-color="#6c6c6f"/><stop offset="1" stop-color="#c4c4c6"/></linearGradient></defs><path d="M3 7 Q3 4 6 4 H15 Q18 4 18 7 V16 H12.5 V9 H8 V12 H6.5 V14 H5.5 V12 H3Z" fill="url(#tg)"/><rect x="2" y="17" width="17" height="1.8" fill="#8e8e91"/><path d="M-1 -1 L5 2 L-1 5Z" fill="#9a9a9c"/></svg>
<svg class="a" style="left:1537px;top:227px" width="26" height="26" viewBox="-1 -1 22 22"><defs><linearGradient id="tg" x1="0" y1="0" x2="0" y2="1"><stop offset="0" stop-color="#6c6c6f"/><stop offset="1" stop-color="#c4c4c6"/></linearGradient></defs><path d="M3 14 Q5 6 14 5 L17 5 V14Z" fill="#8e8e91"/><path d="M2 16 H18 M2 18 H18" stroke="#555" stroke-width="1"/></svg>
<svg class="a" style="left:1537px;top:272px" width="26" height="26" viewBox="-1 -1 22 22"><defs><linearGradient id="tg" x1="0" y1="0" x2="0" y2="1"><stop offset="0" stop-color="#6c6c6f"/><stop offset="1" stop-color="#c4c4c6"/></linearGradient></defs><path d="M6 2 L1 6 L4 10 L5.5 9 V18 H14.5 V9 L16 10 L19 6 L14 2 Q10 5 6 2Z" fill="url(#tg)"/><path d="M7 9 H13 V16 H7Z" fill="none" stroke="#eee" stroke-width="0.8"/><path d="M8.5 9 V16 M10 9 V16 M11.5 9 V16" stroke="#eee" stroke-width="0.6"/><path d="M-1 -1 L5 2 L-1 5Z" fill="#9a9a9c"/></svg>
<svg class="a" style="left:1537px;top:321px" width="26" height="26" viewBox="-1 -1 22 22"><defs><linearGradient id="tg" x1="0" y1="0" x2="0" y2="1"><stop offset="0" stop-color="#6c6c6f"/><stop offset="1" stop-color="#c4c4c6"/></linearGradient></defs><path d="M8 3 Q14 1 18 4 V14 Q12 12 8 15Z" fill="#d0d0d2"/><path d="M4 12h2v2h-2zM8 12h2v2h-2zM6 14h2v2h-2zM10 14h2v2h-2z" fill="#222"/><path d="M-1 -1 L5 2 L-1 5Z" fill="#9a9a9c"/></svg>
<svg class="a" style="left:1537px;top:351px" width="26" height="26" viewBox="-1 -1 22 22"><defs><linearGradient id="tg" x1="0" y1="0" x2="0" y2="1"><stop offset="0" stop-color="#6c6c6f"/><stop offset="1" stop-color="#c4c4c6"/></linearGradient></defs><path d="M6 3 L2 7 L5 10 L6 9 V18 H14 V9 L15 10 L18 7 L14 3 Q10 6 6 3Z" fill="#8e8e91"/><rect x="7" y="8" width="6" height="8" fill="#eee"/><path d="M7 8h2v2h-2zM11 8h2v2h-2zM9 10h2v2h-2zM7 12h2v2h-2zM11 12h2v2h-2zM9 14h2v2h-2z" fill="#222"/><path d="M-1 -1 L5 2 L-1 5Z" fill="#9a9a9c"/></svg>
<svg class="a" style="left:1537px;top:385px" width="26" height="26" viewBox="-1 -1 22 22"><defs><linearGradient id="tg" x1="0" y1="0" x2="0" y2="1"><stop offset="0" stop-color="#6c6c6f"/><stop offset="1" stop-color="#c4c4c6"/></linearGradient></defs><path d="M6 3 L2 7 L5 10 L6 9 V18 H14 V9 L15 10 L18 7 L14 3 Q10 6 6 3Z" fill="#8e8e91"/><rect x="7" y="8" width="6" height="8" fill="#eee"/><path d="M7 8h2v2h-2zM11 8h2v2h-2zM9 10h2v2h-2zM7 12h2v2h-2zM11 12h2v2h-2zM9 14h2v2h-2z" fill="#222"/></svg>
<svg class="a" style="left:1537px;top:431px" width="26" height="26" viewBox="-1 -1 22 22"><defs><linearGradient id="tg" x1="0" y1="0" x2="0" y2="1"><stop offset="0" stop-color="#6c6c6f"/><stop offset="1" stop-color="#c4c4c6"/></linearGradient></defs><path d="M3 17 L17 3" stroke="#d0d0d2" stroke-width="1.5" stroke-dasharray="3 2"/><path d="M-1 -1 L5 2 L-1 5Z" fill="#9a9a9c"/></svg>
<svg class="a" style="left:1537px;top:466px" width="26" height="26" viewBox="-1 -1 22 22"><defs><linearGradient id="tg" x1="0" y1="0" x2="0" y2="1"><stop offset="0" stop-color="#6c6c6f"/><stop offset="1" stop-color="#c4c4c6"/></linearGradient></defs><path d="M2 7 H18" stroke="#d0d0d2" stroke-width="1.5" stroke-dasharray="3 2"/><path d="M2 13 H18" stroke="#d0d0d2" stroke-width="1"/><path d="M21 15 V21 H15Z" fill="#c8c8ca"/></svg>
<svg class="a" style="left:1537px;top:512px" width="26" height="26" viewBox="-1 -1 22 22"><defs><linearGradient id="tg" x1="0" y1="0" x2="0" y2="1"><stop offset="0" stop-color="#6c6c6f"/><stop offset="1" stop-color="#c4c4c6"/></linearGradient></defs><path d="M3 6 L7 8 L3 10 L7 12 L3 14 L7 16" stroke="#d0d0d2" stroke-width="1" fill="none"/><path d="M14 3 V18" stroke="#d0d0d2"/><path d="M-1 -1 L5 2 L-1 5Z" fill="#9a9a9c"/></svg>
<svg class="a" style="left:1537px;top:546px" width="26" height="26" viewBox="-1 -1 22 22"><defs><linearGradient id="tg" x1="0" y1="0" x2="0" y2="1"><stop offset="0" stop-color="#6c6c6f"/><stop offset="1" stop-color="#c4c4c6"/></linearGradient></defs><path d="M2 8 Q4 4 6 8 Q8 12 10 8 Q12 4 14 8 Q16 12 18 8" stroke="#d0d0d2" stroke-width="1.2" fill="none"/><path d="M2 15 H18" stroke="#d0d0d2"/><path d="M21 15 V21 H15Z" fill="#c8c8ca"/></svg>
<svg class="a" style="left:1537px;top:593px" width="26" height="26" viewBox="-1 -1 22 22"><defs><linearGradient id="tg" x1="0" y1="0" x2="0" y2="1"><stop offset="0" stop-color="#6c6c6f"/><stop offset="1" stop-color="#c4c4c6"/></linearGradient></defs><path d="M3 8 L10 5 L16 7 V17 H3Z" fill="#8e8e91"/><circle cx="10" cy="12" r="3" fill="none" stroke="#d0d0d2" stroke-width="1.3"/></svg>
<svg class="a" style="left:1537px;top:640px" width="26" height="26" viewBox="-1 -1 22 22"><defs><linearGradient id="tg" x1="0" y1="0" x2="0" y2="1"><stop offset="0" stop-color="#6c6c6f"/><stop offset="1" stop-color="#c4c4c6"/></linearGradient></defs><path d="M4 4 H16 V17 H4Z" fill="#8e8e91"/><path d="M4 8 H16 M4 12 H16" stroke="#333" stroke-width="1.3"/></svg>
<!-- /TOOLBARS -->
<!-- right panel -->
<div class="a" style="left:1574px;top:43px;width:340px;height:20px;background:#1f1f22"></div>
<div class="a" style="left:1574px;top:63px;width:340px;height:409px;background:#252528"></div>
<div class="a" style="left:1574px;top:477px;width:340px;height:20px;background:#1f1f22"></div>
<div class="a" style="left:1574px;top:497px;width:340px;height:508px;background:#252528"></div>
<svg class="a" style="left:1577px;top:46px" width="18" height="14" viewBox="0 0 18 14"><path d="M1 7 H9 M6 3.5 L9.5 7 L6 10.5" stroke="#f0f0f0" stroke-width="2" fill="none"/><path d="M15.5 1 V13" stroke="#555" stroke-width="1"/></svg><svg class="a" style="left:1898px;top:47px" width="13" height="12" viewBox="0 0 13 12"><g fill="none" stroke="#bbb" stroke-width="1.2"><rect x="4" y="1" width="8" height="6" rx="1.5"/><path d="M4 4 H2.2 Q1 4 1 5.2 V9.8 Q1 11 2.2 11 H7.8 Q9 11 9 9.8 V7"/></g></svg>
<div class="t" style="left:1743px;top:46px;font-size:12px;color:#e0e0e0;transform:translateX(-50%)">물체창</div>
<svg class="a" style="left:1577px;top:480px" width="18" height="14" viewBox="0 0 18 14"><path d="M1 7 H9 M6 3.5 L9.5 7 L6 10.5" stroke="#f0f0f0" stroke-width="2" fill="none"/><path d="M15.5 1 V13" stroke="#555" stroke-width="1"/></svg><svg class="a" style="left:1898px;top:481px" width="13" height="12" viewBox="0 0 13 12"><g fill="none" stroke="#bbb" stroke-width="1.2"><rect x="4" y="1" width="8" height="6" rx="1.5"/><path d="M4 4 H2.2 Q1 4 1 5.2 V9.8 Q1 11 2.2 11 H7.8 Q9 11 9 9.8 V7"/></g></svg>
<div class="t" style="left:1743px;top:480px;font-size:12px;color:#e0e0e0;transform:translateX(-50%)">속성창</div>
<!-- 3D/2D title text -->
<div class="t" style="left:581px;top:46px;font-size:12px;color:#e8e8e8;transform:translateX(-50%) scaleX(0.95)">02강_프렌치슬리브블라우스.dxf</div>
<svg class="a" style="left:849px;top:47px" width="13" height="12" viewBox="0 0 13 12"><g fill="none" stroke="#bbb" stroke-width="1.2"><rect x="4" y="1" width="8" height="6" rx="1.5"/><path d="M4 4 H2.2 Q1 4 1 5.2 V9.8 Q1 11 2.2 11 H7.8 Q9 11 9 9.8 V7"/></g></svg>
<div class="t" style="left:1209px;top:46px;font-size:12px;color:#e8e8e8;transform:translateX(-50%)">2D 창</div>
<svg class="a" style="left:1553px;top:47px" width="13" height="12" viewBox="0 0 13 12"><g fill="none" stroke="#bbb" stroke-width="1.2"><rect x="4" y="1" width="8" height="6" rx="1.5"/><path d="M4 4 H2.2 Q1 4 1 5.2 V9.8 Q1 11 2.2 11 H7.8 Q9 11 9 9.8 V7"/></g></svg>
<!-- tabs -->
<div class="a" style="left:1574px;top:63px;width:340px;height:30px;background:#1f1f22"></div>
<div class="a" style="left:1574px;top:91px;width:309px;height:2px;background:#3a3a3d"></div>
<div class="a" style="left:1574px;top:91px;width:34px;height:2px;background:#5cb0f5"></div>
<div class="a" style="left:1884px;top:63px;width:30px;height:30px;background:#232326"></div>
<svg class="a" style="left:1583px;top:66px" width="18" height="18" viewBox="0 0 18 18"><path d="M3 4 Q9 1 16 2 L14 13 Q8 12 2 15Z" fill="#5aa8f0"/><path d="M2 5 L3 15 Q8 13 14 13 L13 15 Q7 15 2 17Z" fill="#3d7ac8"/></svg>
<svg class="a" style="left:1615px;top:66px" width="17" height="17" viewBox="0 0 17 17"><rect x="0.5" y="0.5" width="16" height="16" fill="#f0f0f0"/><g fill="#111"><rect x="2" y="2" width="3" height="3"/><rect x="8" y="2" width="3" height="3"/><rect x="5" y="5" width="3" height="3"/><rect x="11" y="5" width="3" height="3"/><rect x="2" y="8" width="3" height="3"/><rect x="8" y="8" width="3" height="3"/><rect x="5" y="11" width="3" height="3"/><rect x="11" y="11" width="3" height="3"/></g></svg>
<svg class="a" style="left:1647px;top:66px" width="17" height="17" viewBox="0 0 17 17"><circle cx="8.5" cy="8.5" r="8" fill="#f0f0f0"/><g fill="#252528"><circle cx="6" cy="6" r="1.5"/><circle cx="11" cy="6" r="1.5"/><circle cx="6" cy="11" r="1.5"/><circle cx="11" cy="11" r="1.5"/></g></svg>
<svg class="a" style="left:1679px;top:68px" width="17" height="12"><circle cx="3" cy="6" r="2.6" fill="#f0f0f0"/><path d="M3 6 H16" stroke="#f0f0f0" stroke-width="2"/></svg>
<svg class="a" style="left:1711px;top:66px" width="17" height="17"><path d="M2 15 L15 2" stroke="#f0f0f0" stroke-width="2" stroke-dasharray="3 3"/></svg>
<svg class="a" style="left:1743px;top:66px" width="18" height="17"><path d="M2 14 Q3 10 6 12 Q4 6 8 8 Q7 3 11 5 Q11 1 15 4" stroke="#f0f0f0" stroke-width="1.8" fill="none"/></svg>
<svg class="a" style="left:1775px;top:66px" width="18" height="17" viewBox="0 0 18 17"><path d="M1 1 L7 4 H11 L17 1 V9 L11 6 H7 L1 9Z" fill="#f0f0f0"/><path d="M7 7 L4 16 H7 L9 10 L11 16 H14 L11 7Z" fill="#ddd"/></svg>
<svg class="a" style="left:1807px;top:66px" width="18" height="18"><rect x="5" y="1" width="8" height="16" rx="4" fill="#f0f0f0"/><rect x="7.5" y="3" width="3" height="6" rx="1.5" fill="#252528"/><rect x="7" y="12" width="4" height="2" fill="#252528"/></svg>
<svg class="a" style="left:1839px;top:66px" width="18" height="18"><path d="M1 7 L6 4 V17 H1Z" fill="#f0f0f0"/><path d="M7 2 L12 2 Q10 9 13 17 H7Z" fill="#f0f0f0"/><path d="M13 1 H16 Q14 9 17 17 H14 Q12 9 13 1Z" fill="none" stroke="#f0f0f0" stroke-width="1"/></svg>
<svg class="a" style="left:1870px;top:70px" width="14" height="10"><rect x="0" y="0" width="14" height="9" fill="#f0f0f0"/><path d="M3 0 V5 M6 0 V5 M9 0 V5 M12 0 V5" stroke="#252528" stroke-width="1"/></svg>
<svg class="a" style="left:1888px;top:74px" width="6" height="8"><path d="M6 0 V8 L0 4Z" fill="#ddd"/></svg>
<svg class="a" style="left:1903px;top:74px" width="6" height="8"><path d="M0 0 V8 L6 4Z" fill="#ddd"/></svg>
<!-- clofab row -->
<svg class="a" style="left:1583px;top:112px" width="20" height="20" viewBox="0 0 30 26"><defs><linearGradient id="tfg" x1="0" y1="0" x2="0" y2="1"><stop offset="0" stop-color="#20e0a0"/><stop offset="1" stop-color="#2a90f0"/></linearGradient></defs><g fill="none" stroke="url(#tfg)" stroke-width="2.4" stroke-linecap="round"><path d="M12.8 15.5 V8 A2.9 2.9 0 0 1 18.6 8 V9.8"/><path d="M15.2 11.8 L22.6 16 A2.9 2.9 0 0 1 19.7 21 L18.2 20.2"/><path d="M17.6 16.4 L10.2 20.8 A2.9 2.9 0 0 1 7.3 15.8 L8.8 14.9"/></g></svg>
<svg class="a" style="left:1817px;top:116px" width="15" height="13" viewBox="0 0 15 13"><path d="M0 1 H5 L7 3 H15 V13 H0Z" fill="#d8d8d8"/><path d="M10 4 V10 M7 7 H13" stroke="#252528" stroke-width="1.5"/></svg>
<div class="a" style="left:1836px;top:110px;width:1px;height:25px;background:#2e2e31"></div>
<svg class="a" style="left:1843px;top:117px" width="13" height="11" viewBox="0 0 13 11"><path d="M0 11 Q0 0 6.5 0 Q13 0 13 11 L9 9 L6.5 11 L4 9Z" fill="#c8c8c8"/></svg>
<div class="t" style="left:1859px;top:117px;font-size:13px;color:#e0e0e0;transform:scaleX(0.87);transform-origin:0 0">CLOFAB</div>
<!-- primary row -->
<div class="a" style="left:1584px;top:142px;width:330px;height:20px;background:#1c1c1f"></div>
<svg class="a" style="left:1595px;top:149px" width="8" height="6"><path d="M0 0 H8 L4 6Z" fill="#e0e0e0"/></svg>
<div class="t" style="left:1703px;top:146px;font-size:13px;color:#e0e0e0">Primary</div>
<svg class="a" style="left:1761px;top:146px" width="13" height="13"><path d="M1 12 L2 9 L10 1 L12 3 L4 11Z" fill="#f0f0f0"/></svg>
<svg class="a" style="left:1857px;top:146px" width="11" height="11"><path d="M5.5 0 V11 M0 5.5 H11" stroke="#f0f0f0" stroke-width="1.8"/></svg>
<svg class="a" style="left:1877px;top:146px" width="13" height="11"><path d="M0 1 H4 L5.5 2.5 H12 V11 H0Z" fill="#f0f0f0"/></svg>
<!-- item row -->
<svg class="a" style="left:1588px;top:179px" width="12" height="10"><path d="M1 5 L4.5 8.5 L11 1" stroke="#4aa0f0" stroke-width="2" fill="none"/></svg>
<svg class="a" style="left:1607px;top:166px" width="37" height="37"><rect width="37" height="37" fill="#4a7fb6"/><rect width="37" height="37" fill="url(#furS)"/><defs><pattern id="furS" width="9" height="12" patternUnits="userSpaceOnUse"><path d="M1 0 q1 6 0 12 M5 3 q-1 4 0 8" stroke="#2f6098" stroke-width="0.9" opacity="0.4" fill="none"/></pattern></defs></svg>
<div class="t" style="left:1652px;top:179px;font-size:13px;color:#e0e0e0;transform:scaleX(0.955);transform-origin:0 0">V2_Animal_Alternatives_VeganFur_3</div>
<div class="t" style="left:1882px;top:178px;font-size:13px;font-weight:bold;color:#e8e8e8">···</div>
<div class="a" style="left:1590px;top:206px;width:313px;height:1px;background:#303033"></div>
<!-- taskbar -->
<div class="a" style="left:0;top:1039px;width:1920px;height:41px;background:linear-gradient(90deg,#d6ebf3,#d2e7ef 35%,#d6e2ee 75%,#dae0ee)"></div>
<div class="a" style="left:0;top:1038px;width:1920px;height:1px;background:#28a8f0"></div>
<svg class="a" style="left:16px;top:1052px" width="17" height="16" viewBox="0 0 17 16"><g fill="#111"><path d="M0 1.5 L7.5 0.5 V7.5 H0Z"/><path d="M8.5 0.4 L17 0 V7.5 H8.5Z"/><path d="M0 8.5 H7.5 V15.5 L0 14.5Z"/><path d="M8.5 8.5 H17 V16 L8.5 15.6Z"/></g></svg>
<svg class="a" style="left:61px;top:1049px" width="23" height="23" viewBox="0 0 23 23"><circle cx="13.5" cy="9.5" r="7.5" fill="none" stroke="#111" stroke-width="2.2"/><path d="M8 15 L1.5 21.5" stroke="#111" stroke-width="2.6"/></svg>
<svg class="a" style="left:111px;top:1052px" width="18" height="17" viewBox="0 0 18 17"><g fill="none" stroke="#111" stroke-width="1.6"><path d="M1 1 H12 M1 16 H12"/><rect x="2.5" y="4" width="8" height="9"/><path d="M14 2 V6 M14 8 V15"/></g><rect x="15.5" y="3" width="2" height="2" fill="#111"/></svg>
<svg class="a" style="left:158px;top:1047px" width="26" height="26" viewBox="0 0 26 26"><defs><linearGradient id="edg" x1="0" y1="1" x2="1" y2="0"><stop offset="0" stop-color="#1070d0"/><stop offset="0.5" stop-color="#20a0e8"/><stop offset="1" stop-color="#50d070"/></linearGradient></defs><circle cx="13" cy="13" r="12" fill="url(#edg)"/><path d="M7 15 Q8 9 14 9 Q19 9 19 13 Q15 11 12 14 Q10 18 15 20 Q8 21 7 15Z" fill="#d6e6ee"/><path d="M2 16 Q3 24 13 25 Q7 22 8 16Z" fill="#0c5cb8"/></svg>
<div class="a" style="left:151px;top:1077px;width:40px;height:3px;background:#1a6fd8"></div>
<svg class="a" style="left:207px;top:1049px" width="25" height="23" viewBox="0 0 25 23"><path d="M5 3 L21 1 L23 19 L7 22Z" fill="#f4f4ec" stroke="#9aa" stroke-width="0.8"/><path d="M1 8 L14 2 L20 19 L6 22Z" fill="#8ac8e8"/><path d="M6 5 L20 3 M7 8 L21 6" stroke="#666" stroke-width="0.8"/></svg>
<svg class="a" style="left:257px;top:1050px" width="23" height="21" viewBox="0 0 23 21"><path d="M0 2 Q0 0 2 0 H8 L10 3 H23 V21 H0Z" fill="#e8b020"/><path d="M0 6 H23 V21 H0Z" fill="#f8cf48"/><path d="M6 13 H17 V21 H13 V16 H10 V21 H6Z" fill="#1a78d0"/></svg>
<svg class="a" style="left:308px;top:1048px" width="19" height="24" viewBox="0 0 19 24"><rect x="0.5" y="0.5" width="18" height="23" rx="1" fill="#3a3a3a"/><rect x="2.5" y="2.5" width="14" height="4" fill="#d6e6ee"/><g fill="#d6e6ee"><rect x="3" y="9" width="3" height="2.5"/><rect x="8" y="9" width="3" height="2.5"/><rect x="13" y="9" width="3" height="2.5"/><rect x="3" y="13.5" width="3" height="2.5"/><rect x="8" y="13.5" width="3" height="2.5"/><rect x="13" y="13.5" width="3" height="2.5"/><rect x="3" y="18" width="3" height="2.5"/><rect x="8" y="18" width="3" height="2.5"/><rect x="13" y="18" width="3" height="2.5"/></g></svg>
<svg class="a" style="left:355px;top:1048px" width="24" height="25" viewBox="0 0 24 25"><path d="M12 0 L23 6 V19 L12 25 L1 19 V6Z" fill="#2a8ae8"/><path d="M12 3 L20 7.5 V17.5 L12 22 L4 17.5 V7.5Z" fill="#60b0f8"/><path d="M16 8 Q12 5 9 8 Q6 12 9 16 Q12 19 16 16" fill="none" stroke="#fff" stroke-width="2.6"/></svg>
<div class="a" style="left:347px;top:1077px;width:40px;height:3px;background:#1a6fd8"></div>
<!-- tray -->
<svg class="a" style="left:1649px;top:1052px" width="18" height="17" viewBox="0 0 18 17"><path d="M8 0 L15 2.5 V8 Q15 13.5 8 16.5 Q1 13.5 1 8 V2.5Z" fill="#fff" stroke="#111" stroke-width="1.3"/><path d="M8 0.5 V16 M1.5 8 H14.5" stroke="#111" stroke-width="1.3"/><path d="M1.5 2.7 L8 0.5 V8 H1.5Z" fill="#111"/><circle cx="12.5" cy="12" r="4.3" fill="#1e9e40"/><path d="M10.5 12 L12 13.5 L14.5 10.8" stroke="#fff" stroke-width="1.2" fill="none"/></svg>
<svg class="a" style="left:1675px;top:1053px" width="15" height="15" viewBox="0 0 15 15"><g fill="none" stroke="#111" stroke-width="1.2"><path d="M1 14 Q1 4 12 2"/><path d="M4 14 Q4 7 12 5"/><path d="M7 14 Q7 10 12 8"/></g><circle cx="12" cy="12.5" r="1.5" fill="#111"/></svg>
<div class="a" style="left:1697px;top:1052px;width:16px;height:16px;background:#1a1a1a"></div>
<svg class="a" style="left:1699px;top:1055px" width="12" height="10"><path d="M1 5 Q6 0 11 5 Q6 10 1 5Z" fill="none" stroke="#76b900" stroke-width="1.5"/><circle cx="6" cy="5" r="1.6" fill="#76b900"/></svg>
<svg class="a" style="left:1720px;top:1053px" width="17" height="15" viewBox="0 0 17 15"><path d="M1 5 H4 L8 1 V14 L4 10 H1Z" fill="none" stroke="#111" stroke-width="1.2"/><path d="M11 5 L16 10 M16 5 L11 10" stroke="#111" stroke-width="1.2"/></svg>
<svg class="a" style="left:1745px;top:1052px" width="16" height="16" viewBox="0 0 16 16"><path d="M2 10 Q1 4 6 2 L15 12 Q10 16 4 13Z" fill="#111"/><circle cx="5" cy="12" r="3" fill="#888"/></svg>
<div class="t" style="left:1769px;top:1052px;font-size:17px;color:#111">A</div>
<div class="t" style="left:1827px;top:1044px;font-size:12px;color:#111;transform:translateX(-50%)">오후 4:41</div>
<div class="t" style="left:1827px;top:1062px;font-size:12px;color:#111;transform:translateX(-50%)">2025-12-19</div>
<svg class="a" style="left:1878px;top:1052px" width="18" height="17" viewBox="0 0 18 17"><path d="M1 1 H17 V13 H11 L8 16 L7 13 H1Z" fill="none" stroke="#111" stroke-width="1.3"/></svg>
<div class="a" style="left:1915px;top:1040px;width:1px;height:40px;background:#b8c4cc"></div>
<!-- version bar right icons -->
<svg class="a" style="left:1810px;top:1016px" width="15" height="12" viewBox="0 0 15 12"><rect x="0.5" y="0.5" width="14" height="11" fill="#9a9a9a" stroke="#ccc"/><path d="M7.5 0 V12" stroke="#222" stroke-width="1.2"/></svg>
<div class="a" style="left:1834px;top:1016px;width:15px;height:12px;background:#d0d0d0;border-radius:1px;color:#111;font-size:8px;font-weight:bold;line-height:12px;text-align:center;font-family:'Liberation Sans',sans-serif">3D</div>
<div class="a" style="left:1858px;top:1016px;width:15px;height:12px;background:#d0d0d0;border-radius:1px;color:#111;font-size:8px;font-weight:bold;line-height:12px;text-align:center;font-family:'Liberation Sans',sans-serif">2D</div>
<div class="a" style="left:1879px;top:1012px;width:1px;height:20px;background:#2a2a2d"></div>
<svg class="a" style="left:1886px;top:1015px" width="13" height="13" viewBox="0 0 13 13"><path d="M11 6.5 A4.7 4.7 0 1 1 9.5 3" fill="none" stroke="#d8d8d8" stroke-width="1.5"/><path d="M7.5 1 L11.5 1.5 L10.5 5.5Z" fill="#d8d8d8"/></svg>
</body></html>
